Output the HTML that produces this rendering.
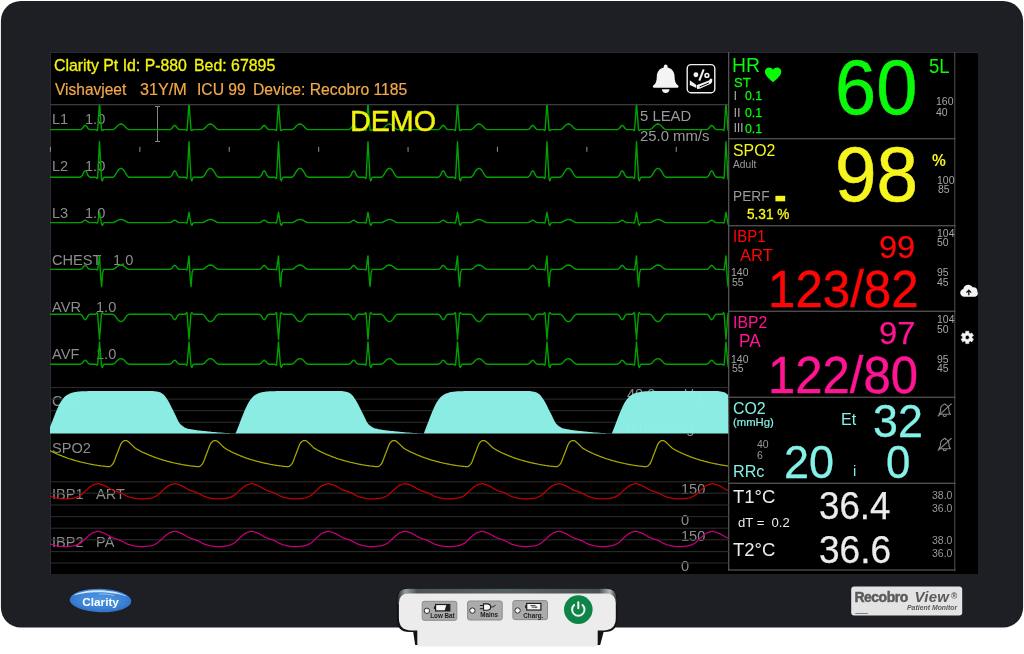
<!DOCTYPE html>
<html lang="en">
<head>
<meta charset="utf-8">
<title>Recobro View Patient Monitor</title>
<style>
html,body{margin:0;padding:0;background:#fff;}
body{width:1024px;height:654px;position:relative;overflow:hidden;font-family:"Liberation Sans", sans-serif;}
.screen{position:absolute;left:50px;top:52px;width:928px;height:522px;background:#000;box-sizing:border-box;border-left:1px solid #2b2c31;border-top:1px solid #2b2c31;}
.t{position:absolute;white-space:pre;line-height:1;font-family:"Liberation Sans", sans-serif;}
svg.ov{position:absolute;left:0;top:0;}
.lay{position:absolute;left:0;top:0;width:1024px;height:654px;will-change:transform;}
</style>
</head>
<body>
<svg class="ov" width="1024" height="654" viewBox="0 0 1024 654"><rect x="0.9" y="0.9" width="1022.2" height="626.6" rx="20" ry="20" fill="#1e1f24"/></svg>
<div class="screen"></div>

<div class="lay">
<div class="t" style="left:51.60px;top:110px;font-size:15.2px;line-height:17px;color:#8c8c8c;transform:scaleX(0.9606);transform-origin:0 50%;">L1</div>
<div class="t" style="left:85.00px;top:110px;font-size:15.2px;line-height:17px;color:#8c8c8c;transform:scaleX(0.9606);transform-origin:0 50%;">1.0</div>
<div class="t" style="left:51.60px;top:157px;font-size:15.2px;line-height:17px;color:#8c8c8c;transform:scaleX(0.9606);transform-origin:0 50%;">L2</div>
<div class="t" style="left:85.00px;top:157px;font-size:15.2px;line-height:17px;color:#8c8c8c;transform:scaleX(0.9606);transform-origin:0 50%;">1.0</div>
<div class="t" style="left:51.60px;top:204px;font-size:15.2px;line-height:17px;color:#8c8c8c;transform:scaleX(0.9606);transform-origin:0 50%;">L3</div>
<div class="t" style="left:85.00px;top:204px;font-size:15.2px;line-height:17px;color:#8c8c8c;transform:scaleX(0.9606);transform-origin:0 50%;">1.0</div>
<div class="t" style="left:51.60px;top:251px;font-size:15.2px;line-height:17px;color:#8c8c8c;transform:scaleX(0.9606);transform-origin:0 50%;">CHEST</div>
<div class="t" style="left:113.20px;top:251px;font-size:15.2px;line-height:17px;color:#8c8c8c;transform:scaleX(0.9606);transform-origin:0 50%;">1.0</div>
<div class="t" style="left:51.60px;top:298px;font-size:15.2px;line-height:17px;color:#8c8c8c;transform:scaleX(0.9606);transform-origin:0 50%;">AVR</div>
<div class="t" style="left:95.80px;top:298px;font-size:15.2px;line-height:17px;color:#8c8c8c;transform:scaleX(0.9606);transform-origin:0 50%;">1.0</div>
<div class="t" style="left:51.60px;top:345px;font-size:15.2px;line-height:17px;color:#8c8c8c;transform:scaleX(0.9606);transform-origin:0 50%;">AVF</div>
<div class="t" style="left:95.80px;top:345px;font-size:15.2px;line-height:17px;color:#8c8c8c;transform:scaleX(0.9606);transform-origin:0 50%;">1.0</div>
<div class="t" style="left:51.60px;top:392px;font-size:15.2px;line-height:17px;color:#8c8c8c;transform:scaleX(0.9606);transform-origin:0 50%;">CO2</div>
<div class="t" style="left:51.60px;top:439px;font-size:15.2px;line-height:17px;color:#8c8c8c;transform:scaleX(0.9606);transform-origin:0 50%;">SPO2</div>
<div class="t" style="left:51.60px;top:485px;font-size:15.2px;line-height:17px;color:#8c8c8c;transform:scaleX(0.9606);transform-origin:0 50%;">IBP1</div>
<div class="t" style="left:95.60px;top:485px;font-size:15.2px;line-height:17px;color:#8c8c8c;transform:scaleX(0.9606);transform-origin:0 50%;">ART</div>
<div class="t" style="left:51.60px;top:533px;font-size:15.2px;line-height:17px;color:#8c8c8c;transform:scaleX(0.9606);transform-origin:0 50%;">IBP2</div>
<div class="t" style="left:96.00px;top:533px;font-size:15.2px;line-height:17px;color:#8c8c8c;transform:scaleX(0.9606);transform-origin:0 50%;">PA</div>
<div class="t" style="left:626.60px;top:385px;font-size:15.2px;line-height:17px;color:#8c8c8c;transform:scaleX(0.9606);transform-origin:0 50%;">40.0 mmHg</div>
<div class="t" style="left:627.20px;top:419px;font-size:15.2px;line-height:17px;color:#8c8c8c;transform:scaleX(0.9606);transform-origin:0 50%;">0.0 mmHg</div>
<div class="t" style="left:681.00px;top:480px;font-size:15.2px;line-height:17px;color:#8c8c8c;transform:scaleX(0.9606);transform-origin:0 50%;">150</div>
<div class="t" style="left:681.30px;top:511px;font-size:15.2px;line-height:17px;color:#8c8c8c;transform:scaleX(0.9606);transform-origin:0 50%;">0</div>
<div class="t" style="left:681.00px;top:527px;font-size:15.2px;line-height:17px;color:#8c8c8c;transform:scaleX(0.9606);transform-origin:0 50%;">150</div>
<div class="t" style="left:681.30px;top:557px;font-size:15.2px;line-height:17px;color:#8c8c8c;transform:scaleX(0.9606);transform-origin:0 50%;">0</div>
</div>
<svg class="ov" width="1024" height="654" viewBox="0 0 1024 654">
<rect x="50" y="104.0" width="679" height="1.3" fill="#3c3c3c"/>
<rect x="728.1" y="52" width="1.2" height="518.6" fill="#5a5a5a"/>
<rect x="954.2" y="52" width="1.1" height="518.6" fill="#4b4b4b"/>
<rect x="728.1" y="138.15" width="227.4" height="1.2" fill="#5a5a5a"/>
<rect x="728.1" y="225.15" width="227.4" height="1.2" fill="#5a5a5a"/>
<rect x="728.1" y="310.65" width="227.4" height="1.2" fill="#5a5a5a"/>
<rect x="728.1" y="396.65" width="227.4" height="1.2" fill="#5a5a5a"/>
<rect x="728.1" y="482.65" width="227.4" height="1.2" fill="#5a5a5a"/>
<rect x="728.1" y="569.4" width="227.4" height="1.2" fill="#5a5a5a"/>
<rect x="775.4" y="195.8" width="9.8" height="5.5" fill="#f6f61e"/>
<clipPath id="wc"><rect x="50" y="105" width="678.5" height="469"/></clipPath>
<rect x="50" y="386.95" width="678.5" height="1.1" fill="#2b2b2b"/>
<rect x="50" y="398.55" width="678.5" height="1.1" fill="#2b2b2b"/>
<rect x="50" y="410.15" width="678.5" height="1.1" fill="#2b2b2b"/>
<rect x="50" y="421.75" width="678.5" height="1.1" fill="#2b2b2b"/>
<rect x="50" y="481.25" width="678.5" height="1.1" fill="#2b2b2b"/>
<rect x="50" y="492.65" width="678.5" height="1.1" fill="#2b2b2b"/>
<rect x="50" y="504.45" width="678.5" height="1.1" fill="#2b2b2b"/>
<rect x="50" y="516.05" width="678.5" height="1.1" fill="#2b2b2b"/>
<rect x="50" y="527.65" width="678.5" height="1.1" fill="#2b2b2b"/>
<rect x="50" y="539.25" width="678.5" height="1.1" fill="#2b2b2b"/>
<rect x="50" y="551.05" width="678.5" height="1.1" fill="#2b2b2b"/>
<rect x="50" y="562.45" width="678.5" height="1.1" fill="#2b2b2b"/>
<rect x="49.9" y="146.9" width="1.1" height="4.9" fill="#858585"/>
<rect x="139.3" y="146.9" width="1.1" height="4.9" fill="#858585"/>
<rect x="228.7" y="146.9" width="1.1" height="4.9" fill="#858585"/>
<rect x="318.1" y="146.9" width="1.1" height="4.9" fill="#858585"/>
<rect x="407.5" y="146.9" width="1.1" height="4.9" fill="#858585"/>
<rect x="496.9" y="146.9" width="1.1" height="4.9" fill="#858585"/>
<rect x="586.3" y="146.9" width="1.1" height="4.9" fill="#858585"/>
<rect x="675.7" y="146.9" width="1.1" height="4.9" fill="#858585"/>
<path d="M157.5 106.5V141.5M155 106.5H160M155 141.5H160" stroke="#858585" stroke-width="1" fill="none"/>
<path d="M-9.0 129.6 L-7.2 128.5 L-5.6 126.2 L-4.3 125.3 L-3.0 126.2 L-1.4 128.5 L0.2 129.6 L6.4 129.6 L7.5 130.6 L8.1 130.2 L10.0 102.6 L12.0 130.1 L12.9 130.6 L13.9 129.8 L15.0 129.6 L23.5 129.6 L25.5 128.5 L28.0 125.7 L30.0 124.3 L31.4 124.0 L32.8 124.3 L34.8 125.7 L37.3 128.5 L39.3 129.6 L80.5 129.6 L82.3 128.5 L83.9 126.2 L85.2 125.3 L86.5 126.2 L88.1 128.5 L89.7 129.6 L95.9 129.6 L97.0 130.6 L97.6 130.2 L99.5 102.6 L101.5 130.1 L102.4 130.6 L103.4 129.8 L104.5 129.6 L113.0 129.6 L115.0 128.5 L117.5 125.7 L119.5 124.3 L120.9 124.0 L122.3 124.3 L124.3 125.7 L126.8 128.5 L128.8 129.6 L170.0 129.6 L171.8 128.5 L173.4 126.2 L174.7 125.3 L176.0 126.2 L177.6 128.5 L179.2 129.6 L185.4 129.6 L186.5 130.6 L187.1 130.2 L189.0 102.6 L191.0 130.1 L191.9 130.6 L192.9 129.8 L194.0 129.6 L202.5 129.6 L204.5 128.5 L207.0 125.7 L209.0 124.3 L210.4 124.0 L211.8 124.3 L213.8 125.7 L216.3 128.5 L218.3 129.6 L259.5 129.6 L261.3 128.5 L262.9 126.2 L264.2 125.3 L265.5 126.2 L267.1 128.5 L268.7 129.6 L274.9 129.6 L276.0 130.6 L276.6 130.2 L278.5 102.6 L280.5 130.1 L281.4 130.6 L282.4 129.8 L283.5 129.6 L292.0 129.6 L294.0 128.5 L296.5 125.7 L298.5 124.3 L299.9 124.0 L301.3 124.3 L303.3 125.7 L305.8 128.5 L307.8 129.6 L349.0 129.6 L350.8 128.5 L352.4 126.2 L353.7 125.3 L355.0 126.2 L356.6 128.5 L358.2 129.6 L364.4 129.6 L365.5 130.6 L366.1 130.2 L368.0 102.6 L370.0 130.1 L370.9 130.6 L371.9 129.8 L373.0 129.6 L381.5 129.6 L383.5 128.5 L386.0 125.7 L388.0 124.3 L389.4 124.0 L390.8 124.3 L392.8 125.7 L395.3 128.5 L397.3 129.6 L438.5 129.6 L440.3 128.5 L441.9 126.2 L443.2 125.3 L444.5 126.2 L446.1 128.5 L447.7 129.6 L453.9 129.6 L455.0 130.6 L455.6 130.2 L457.5 102.6 L459.5 130.1 L460.4 130.6 L461.4 129.8 L462.5 129.6 L471.0 129.6 L473.0 128.5 L475.5 125.7 L477.5 124.3 L478.9 124.0 L480.3 124.3 L482.3 125.7 L484.8 128.5 L486.8 129.6 L528.0 129.6 L529.8 128.5 L531.4 126.2 L532.7 125.3 L534.0 126.2 L535.6 128.5 L537.2 129.6 L543.4 129.6 L544.5 130.6 L545.1 130.2 L547.0 102.6 L549.0 130.1 L549.9 130.6 L550.9 129.8 L552.0 129.6 L560.5 129.6 L562.5 128.5 L565.0 125.7 L567.0 124.3 L568.4 124.0 L569.8 124.3 L571.8 125.7 L574.3 128.5 L576.3 129.6 L617.5 129.6 L619.3 128.5 L620.9 126.2 L622.2 125.3 L623.5 126.2 L625.1 128.5 L626.7 129.6 L632.9 129.6 L634.0 130.6 L634.6 130.2 L636.5 102.6 L638.5 130.1 L639.4 130.6 L640.4 129.8 L641.5 129.6 L650.0 129.6 L652.0 128.5 L654.5 125.7 L656.5 124.3 L657.9 124.0 L659.3 124.3 L661.3 125.7 L663.8 128.5 L665.8 129.6 L707.0 129.6 L708.8 128.5 L710.4 126.2 L711.7 125.3 L713.0 126.2 L714.6 128.5 L716.2 129.6 L722.4 129.6 L723.5 130.6 L724.1 130.2 L726.0 102.6 L728.0 130.1 L728.9 130.6 L729.9 129.8 L731.0 129.6 L739.5 129.6 L741.5 128.5 L744.0 125.7 L746.0 124.3 L747.4 124.0 L748.8 124.3 L750.8 125.7 L753.3 128.5 L755.3 129.6" stroke="#00a200" stroke-width="1.4" fill="none" stroke-linejoin="round" clip-path="url(#wc)"/>
<path d="M-9.0 177.2 L-7.2 175.6 L-5.6 172.0 L-4.3 170.7 L-3.0 172.0 L-1.4 175.6 L0.2 177.2 L6.4 177.2 L7.5 178.5 L8.1 178.0 L10.0 141.7 L12.0 179.0 L12.9 180.9 L13.9 177.9 L15.0 177.2 L23.5 177.2 L25.5 175.4 L28.0 171.0 L30.0 168.8 L31.4 168.3 L32.8 168.8 L34.8 171.0 L37.3 175.4 L39.3 177.2 L80.5 177.2 L82.3 175.6 L83.9 172.0 L85.2 170.7 L86.5 172.0 L88.1 175.6 L89.7 177.2 L95.9 177.2 L97.0 178.5 L97.6 178.0 L99.5 141.7 L101.5 179.0 L102.4 180.9 L103.4 177.9 L104.5 177.2 L113.0 177.2 L115.0 175.4 L117.5 171.0 L119.5 168.8 L120.9 168.3 L122.3 168.8 L124.3 171.0 L126.8 175.4 L128.8 177.2 L170.0 177.2 L171.8 175.6 L173.4 172.0 L174.7 170.7 L176.0 172.0 L177.6 175.6 L179.2 177.2 L185.4 177.2 L186.5 178.5 L187.1 178.0 L189.0 141.7 L191.0 179.0 L191.9 180.9 L192.9 177.9 L194.0 177.2 L202.5 177.2 L204.5 175.4 L207.0 171.0 L209.0 168.8 L210.4 168.3 L211.8 168.8 L213.8 171.0 L216.3 175.4 L218.3 177.2 L259.5 177.2 L261.3 175.6 L262.9 172.0 L264.2 170.7 L265.5 172.0 L267.1 175.6 L268.7 177.2 L274.9 177.2 L276.0 178.5 L276.6 178.0 L278.5 141.7 L280.5 179.0 L281.4 180.9 L282.4 177.9 L283.5 177.2 L292.0 177.2 L294.0 175.4 L296.5 171.0 L298.5 168.8 L299.9 168.3 L301.3 168.8 L303.3 171.0 L305.8 175.4 L307.8 177.2 L349.0 177.2 L350.8 175.6 L352.4 172.0 L353.7 170.7 L355.0 172.0 L356.6 175.6 L358.2 177.2 L364.4 177.2 L365.5 178.5 L366.1 178.0 L368.0 141.7 L370.0 179.0 L370.9 180.9 L371.9 177.9 L373.0 177.2 L381.5 177.2 L383.5 175.4 L386.0 171.0 L388.0 168.8 L389.4 168.3 L390.8 168.8 L392.8 171.0 L395.3 175.4 L397.3 177.2 L438.5 177.2 L440.3 175.6 L441.9 172.0 L443.2 170.7 L444.5 172.0 L446.1 175.6 L447.7 177.2 L453.9 177.2 L455.0 178.5 L455.6 178.0 L457.5 141.7 L459.5 179.0 L460.4 180.9 L461.4 177.9 L462.5 177.2 L471.0 177.2 L473.0 175.4 L475.5 171.0 L477.5 168.8 L478.9 168.3 L480.3 168.8 L482.3 171.0 L484.8 175.4 L486.8 177.2 L528.0 177.2 L529.8 175.6 L531.4 172.0 L532.7 170.7 L534.0 172.0 L535.6 175.6 L537.2 177.2 L543.4 177.2 L544.5 178.5 L545.1 178.0 L547.0 141.7 L549.0 179.0 L549.9 180.9 L550.9 177.9 L552.0 177.2 L560.5 177.2 L562.5 175.4 L565.0 171.0 L567.0 168.8 L568.4 168.3 L569.8 168.8 L571.8 171.0 L574.3 175.4 L576.3 177.2 L617.5 177.2 L619.3 175.6 L620.9 172.0 L622.2 170.7 L623.5 172.0 L625.1 175.6 L626.7 177.2 L632.9 177.2 L634.0 178.5 L634.6 178.0 L636.5 141.7 L638.5 179.0 L639.4 180.9 L640.4 177.9 L641.5 177.2 L650.0 177.2 L652.0 175.4 L654.5 171.0 L656.5 168.8 L657.9 168.3 L659.3 168.8 L661.3 171.0 L663.8 175.4 L665.8 177.2 L707.0 177.2 L708.8 175.6 L710.4 172.0 L711.7 170.7 L713.0 172.0 L714.6 175.6 L716.2 177.2 L722.4 177.2 L723.5 178.5 L724.1 178.0 L726.0 141.7 L728.0 179.0 L728.9 180.9 L729.9 177.9 L731.0 177.2 L739.5 177.2 L741.5 175.4 L744.0 171.0 L746.0 168.8 L747.4 168.3 L748.8 168.8 L750.8 171.0 L753.3 175.4 L755.3 177.2" stroke="#00a200" stroke-width="1.4" fill="none" stroke-linejoin="round" clip-path="url(#wc)"/>
<path d="M-9.0 222.6 L-7.2 222.0 L-5.6 220.7 L-4.3 220.2 L-3.0 220.7 L-1.4 222.0 L0.2 222.6 L6.4 222.6 L7.5 223.1 L8.1 222.9 L10.0 212.3 L12.0 224.0 L12.9 225.4 L13.9 223.2 L15.0 222.6 L23.5 222.6 L25.5 222.0 L28.0 220.4 L30.0 219.6 L31.4 219.4 L32.8 219.6 L34.8 220.4 L37.3 222.0 L39.3 222.6 L80.5 222.6 L82.3 222.0 L83.9 220.7 L85.2 220.2 L86.5 220.7 L88.1 222.0 L89.7 222.6 L95.9 222.6 L97.0 223.1 L97.6 222.9 L99.5 212.3 L101.5 224.0 L102.4 225.4 L103.4 223.2 L104.5 222.6 L113.0 222.6 L115.0 222.0 L117.5 220.4 L119.5 219.6 L120.9 219.4 L122.3 219.6 L124.3 220.4 L126.8 222.0 L128.8 222.6 L170.0 222.6 L171.8 222.0 L173.4 220.7 L174.7 220.2 L176.0 220.7 L177.6 222.0 L179.2 222.6 L185.4 222.6 L186.5 223.1 L187.1 222.9 L189.0 212.3 L191.0 224.0 L191.9 225.4 L192.9 223.2 L194.0 222.6 L202.5 222.6 L204.5 222.0 L207.0 220.4 L209.0 219.6 L210.4 219.4 L211.8 219.6 L213.8 220.4 L216.3 222.0 L218.3 222.6 L259.5 222.6 L261.3 222.0 L262.9 220.7 L264.2 220.2 L265.5 220.7 L267.1 222.0 L268.7 222.6 L274.9 222.6 L276.0 223.1 L276.6 222.9 L278.5 212.3 L280.5 224.0 L281.4 225.4 L282.4 223.2 L283.5 222.6 L292.0 222.6 L294.0 222.0 L296.5 220.4 L298.5 219.6 L299.9 219.4 L301.3 219.6 L303.3 220.4 L305.8 222.0 L307.8 222.6 L349.0 222.6 L350.8 222.0 L352.4 220.7 L353.7 220.2 L355.0 220.7 L356.6 222.0 L358.2 222.6 L364.4 222.6 L365.5 223.1 L366.1 222.9 L368.0 212.3 L370.0 224.0 L370.9 225.4 L371.9 223.2 L373.0 222.6 L381.5 222.6 L383.5 222.0 L386.0 220.4 L388.0 219.6 L389.4 219.4 L390.8 219.6 L392.8 220.4 L395.3 222.0 L397.3 222.6 L438.5 222.6 L440.3 222.0 L441.9 220.7 L443.2 220.2 L444.5 220.7 L446.1 222.0 L447.7 222.6 L453.9 222.6 L455.0 223.1 L455.6 222.9 L457.5 212.3 L459.5 224.0 L460.4 225.4 L461.4 223.2 L462.5 222.6 L471.0 222.6 L473.0 222.0 L475.5 220.4 L477.5 219.6 L478.9 219.4 L480.3 219.6 L482.3 220.4 L484.8 222.0 L486.8 222.6 L528.0 222.6 L529.8 222.0 L531.4 220.7 L532.7 220.2 L534.0 220.7 L535.6 222.0 L537.2 222.6 L543.4 222.6 L544.5 223.1 L545.1 222.9 L547.0 212.3 L549.0 224.0 L549.9 225.4 L550.9 223.2 L552.0 222.6 L560.5 222.6 L562.5 222.0 L565.0 220.4 L567.0 219.6 L568.4 219.4 L569.8 219.6 L571.8 220.4 L574.3 222.0 L576.3 222.6 L617.5 222.6 L619.3 222.0 L620.9 220.7 L622.2 220.2 L623.5 220.7 L625.1 222.0 L626.7 222.6 L632.9 222.6 L634.0 223.1 L634.6 222.9 L636.5 212.3 L638.5 224.0 L639.4 225.4 L640.4 223.2 L641.5 222.6 L650.0 222.6 L652.0 222.0 L654.5 220.4 L656.5 219.6 L657.9 219.4 L659.3 219.6 L661.3 220.4 L663.8 222.0 L665.8 222.6 L707.0 222.6 L708.8 222.0 L710.4 220.7 L711.7 220.2 L713.0 220.7 L714.6 222.0 L716.2 222.6 L722.4 222.6 L723.5 223.1 L724.1 222.9 L726.0 212.3 L728.0 224.0 L728.9 225.4 L729.9 223.2 L731.0 222.6 L739.5 222.6 L741.5 222.0 L744.0 220.4 L746.0 219.6 L747.4 219.4 L748.8 219.6 L750.8 220.4 L753.3 222.0 L755.3 222.6" stroke="#00a200" stroke-width="1.4" fill="none" stroke-linejoin="round" clip-path="url(#wc)"/>
<path d="M-9.0 269.4 L-7.2 268.4 L-5.6 266.1 L-4.3 265.3 L-3.0 266.1 L-1.4 268.4 L0.2 269.4 L6.4 269.4 L7.5 270.0 L8.1 269.8 L10.0 255.9 L11.2 277.9 L12.1 286.5 L13.1 272.8 L14.2 269.4 L23.5 269.4 L25.5 268.5 L28.0 266.3 L30.0 265.2 L31.4 265.0 L32.8 265.2 L34.8 266.3 L37.3 268.5 L39.3 269.4 L80.5 269.4 L82.3 268.4 L83.9 266.1 L85.2 265.3 L86.5 266.1 L88.1 268.4 L89.7 269.4 L95.9 269.4 L97.0 270.0 L97.6 269.8 L99.5 255.9 L100.7 277.9 L101.6 286.5 L102.6 272.8 L103.7 269.4 L113.0 269.4 L115.0 268.5 L117.5 266.3 L119.5 265.2 L120.9 265.0 L122.3 265.2 L124.3 266.3 L126.8 268.5 L128.8 269.4 L170.0 269.4 L171.8 268.4 L173.4 266.1 L174.7 265.3 L176.0 266.1 L177.6 268.4 L179.2 269.4 L185.4 269.4 L186.5 270.0 L187.1 269.8 L189.0 255.9 L190.2 277.9 L191.1 286.5 L192.1 272.8 L193.2 269.4 L202.5 269.4 L204.5 268.5 L207.0 266.3 L209.0 265.2 L210.4 265.0 L211.8 265.2 L213.8 266.3 L216.3 268.5 L218.3 269.4 L259.5 269.4 L261.3 268.4 L262.9 266.1 L264.2 265.3 L265.5 266.1 L267.1 268.4 L268.7 269.4 L274.9 269.4 L276.0 270.0 L276.6 269.8 L278.5 255.9 L279.7 277.9 L280.6 286.5 L281.6 272.8 L282.7 269.4 L292.0 269.4 L294.0 268.5 L296.5 266.3 L298.5 265.2 L299.9 265.0 L301.3 265.2 L303.3 266.3 L305.8 268.5 L307.8 269.4 L349.0 269.4 L350.8 268.4 L352.4 266.1 L353.7 265.3 L355.0 266.1 L356.6 268.4 L358.2 269.4 L364.4 269.4 L365.5 270.0 L366.1 269.8 L368.0 255.9 L369.2 277.9 L370.1 286.5 L371.1 272.8 L372.2 269.4 L381.5 269.4 L383.5 268.5 L386.0 266.3 L388.0 265.2 L389.4 265.0 L390.8 265.2 L392.8 266.3 L395.3 268.5 L397.3 269.4 L438.5 269.4 L440.3 268.4 L441.9 266.1 L443.2 265.3 L444.5 266.1 L446.1 268.4 L447.7 269.4 L453.9 269.4 L455.0 270.0 L455.6 269.8 L457.5 255.9 L458.7 277.9 L459.6 286.5 L460.6 272.8 L461.7 269.4 L471.0 269.4 L473.0 268.5 L475.5 266.3 L477.5 265.2 L478.9 265.0 L480.3 265.2 L482.3 266.3 L484.8 268.5 L486.8 269.4 L528.0 269.4 L529.8 268.4 L531.4 266.1 L532.7 265.3 L534.0 266.1 L535.6 268.4 L537.2 269.4 L543.4 269.4 L544.5 270.0 L545.1 269.8 L547.0 255.9 L548.2 277.9 L549.1 286.5 L550.1 272.8 L551.2 269.4 L560.5 269.4 L562.5 268.5 L565.0 266.3 L567.0 265.2 L568.4 265.0 L569.8 265.2 L571.8 266.3 L574.3 268.5 L576.3 269.4 L617.5 269.4 L619.3 268.4 L620.9 266.1 L622.2 265.3 L623.5 266.1 L625.1 268.4 L626.7 269.4 L632.9 269.4 L634.0 270.0 L634.6 269.8 L636.5 255.9 L637.7 277.9 L638.6 286.5 L639.6 272.8 L640.7 269.4 L650.0 269.4 L652.0 268.5 L654.5 266.3 L656.5 265.2 L657.9 265.0 L659.3 265.2 L661.3 266.3 L663.8 268.5 L665.8 269.4 L707.0 269.4 L708.8 268.4 L710.4 266.1 L711.7 265.3 L713.0 266.1 L714.6 268.4 L716.2 269.4 L722.4 269.4 L723.5 270.0 L724.1 269.8 L726.0 255.9 L727.2 277.9 L728.1 286.5 L729.1 272.8 L730.2 269.4 L739.5 269.4 L741.5 268.5 L744.0 266.3 L746.0 265.2 L747.4 265.0 L748.8 265.2 L750.8 266.3 L753.3 268.5 L755.3 269.4" stroke="#00a200" stroke-width="1.4" fill="none" stroke-linejoin="round" clip-path="url(#wc)"/>
<path d="M-9.0 314.2 L-7.2 315.6 L-5.6 318.7 L-4.3 319.8 L-3.0 318.7 L-1.4 315.6 L0.2 314.2 L6.4 314.2 L7.5 312.6 L8.1 313.3 L10.0 339.2 L12.0 313.4 L12.9 312.6 L13.9 313.9 L15.0 314.2 L23.5 314.2 L25.5 315.7 L28.0 319.4 L30.0 321.3 L31.4 321.6 L32.8 321.3 L34.8 319.4 L37.3 315.7 L39.3 314.2 L80.5 314.2 L82.3 315.6 L83.9 318.7 L85.2 319.8 L86.5 318.7 L88.1 315.6 L89.7 314.2 L95.9 314.2 L97.0 312.6 L97.6 313.3 L99.5 339.2 L101.5 313.4 L102.4 312.6 L103.4 313.9 L104.5 314.2 L113.0 314.2 L115.0 315.7 L117.5 319.4 L119.5 321.3 L120.9 321.6 L122.3 321.3 L124.3 319.4 L126.8 315.7 L128.8 314.2 L170.0 314.2 L171.8 315.6 L173.4 318.7 L174.7 319.8 L176.0 318.7 L177.6 315.6 L179.2 314.2 L185.4 314.2 L186.5 312.6 L187.1 313.3 L189.0 339.2 L191.0 313.4 L191.9 312.6 L192.9 313.9 L194.0 314.2 L202.5 314.2 L204.5 315.7 L207.0 319.4 L209.0 321.3 L210.4 321.6 L211.8 321.3 L213.8 319.4 L216.3 315.7 L218.3 314.2 L259.5 314.2 L261.3 315.6 L262.9 318.7 L264.2 319.8 L265.5 318.7 L267.1 315.6 L268.7 314.2 L274.9 314.2 L276.0 312.6 L276.6 313.3 L278.5 339.2 L280.5 313.4 L281.4 312.6 L282.4 313.9 L283.5 314.2 L292.0 314.2 L294.0 315.7 L296.5 319.4 L298.5 321.3 L299.9 321.6 L301.3 321.3 L303.3 319.4 L305.8 315.7 L307.8 314.2 L349.0 314.2 L350.8 315.6 L352.4 318.7 L353.7 319.8 L355.0 318.7 L356.6 315.6 L358.2 314.2 L364.4 314.2 L365.5 312.6 L366.1 313.3 L368.0 339.2 L370.0 313.4 L370.9 312.6 L371.9 313.9 L373.0 314.2 L381.5 314.2 L383.5 315.7 L386.0 319.4 L388.0 321.3 L389.4 321.6 L390.8 321.3 L392.8 319.4 L395.3 315.7 L397.3 314.2 L438.5 314.2 L440.3 315.6 L441.9 318.7 L443.2 319.8 L444.5 318.7 L446.1 315.6 L447.7 314.2 L453.9 314.2 L455.0 312.6 L455.6 313.3 L457.5 339.2 L459.5 313.4 L460.4 312.6 L461.4 313.9 L462.5 314.2 L471.0 314.2 L473.0 315.7 L475.5 319.4 L477.5 321.3 L478.9 321.6 L480.3 321.3 L482.3 319.4 L484.8 315.7 L486.8 314.2 L528.0 314.2 L529.8 315.6 L531.4 318.7 L532.7 319.8 L534.0 318.7 L535.6 315.6 L537.2 314.2 L543.4 314.2 L544.5 312.6 L545.1 313.3 L547.0 339.2 L549.0 313.4 L549.9 312.6 L550.9 313.9 L552.0 314.2 L560.5 314.2 L562.5 315.7 L565.0 319.4 L567.0 321.3 L568.4 321.6 L569.8 321.3 L571.8 319.4 L574.3 315.7 L576.3 314.2 L617.5 314.2 L619.3 315.6 L620.9 318.7 L622.2 319.8 L623.5 318.7 L625.1 315.6 L626.7 314.2 L632.9 314.2 L634.0 312.6 L634.6 313.3 L636.5 339.2 L638.5 313.4 L639.4 312.6 L640.4 313.9 L641.5 314.2 L650.0 314.2 L652.0 315.7 L654.5 319.4 L656.5 321.3 L657.9 321.6 L659.3 321.3 L661.3 319.4 L663.8 315.7 L665.8 314.2 L707.0 314.2 L708.8 315.6 L710.4 318.7 L711.7 319.8 L713.0 318.7 L714.6 315.6 L716.2 314.2 L722.4 314.2 L723.5 312.6 L724.1 313.3 L726.0 339.2 L728.0 313.4 L728.9 312.6 L729.9 313.9 L731.0 314.2 L739.5 314.2 L741.5 315.7 L744.0 319.4 L746.0 321.3 L747.4 321.6 L748.8 321.3 L750.8 319.4 L753.3 315.7 L755.3 314.2" stroke="#00a200" stroke-width="1.4" fill="none" stroke-linejoin="round" clip-path="url(#wc)"/>
<path d="M-9.0 364.2 L-7.2 363.2 L-5.6 361.0 L-4.3 360.2 L-3.0 361.0 L-1.4 363.2 L0.2 364.2 L6.4 364.2 L7.5 365.2 L8.1 364.8 L10.0 342.0 L12.0 365.9 L12.9 367.6 L13.9 364.9 L15.0 364.2 L23.5 364.2 L25.5 363.1 L28.0 360.3 L30.0 358.9 L31.4 358.6 L32.8 358.9 L34.8 360.3 L37.3 363.1 L39.3 364.2 L80.5 364.2 L82.3 363.2 L83.9 361.0 L85.2 360.2 L86.5 361.0 L88.1 363.2 L89.7 364.2 L95.9 364.2 L97.0 365.2 L97.6 364.8 L99.5 342.0 L101.5 365.9 L102.4 367.6 L103.4 364.9 L104.5 364.2 L113.0 364.2 L115.0 363.1 L117.5 360.3 L119.5 358.9 L120.9 358.6 L122.3 358.9 L124.3 360.3 L126.8 363.1 L128.8 364.2 L170.0 364.2 L171.8 363.2 L173.4 361.0 L174.7 360.2 L176.0 361.0 L177.6 363.2 L179.2 364.2 L185.4 364.2 L186.5 365.2 L187.1 364.8 L189.0 342.0 L191.0 365.9 L191.9 367.6 L192.9 364.9 L194.0 364.2 L202.5 364.2 L204.5 363.1 L207.0 360.3 L209.0 358.9 L210.4 358.6 L211.8 358.9 L213.8 360.3 L216.3 363.1 L218.3 364.2 L259.5 364.2 L261.3 363.2 L262.9 361.0 L264.2 360.2 L265.5 361.0 L267.1 363.2 L268.7 364.2 L274.9 364.2 L276.0 365.2 L276.6 364.8 L278.5 342.0 L280.5 365.9 L281.4 367.6 L282.4 364.9 L283.5 364.2 L292.0 364.2 L294.0 363.1 L296.5 360.3 L298.5 358.9 L299.9 358.6 L301.3 358.9 L303.3 360.3 L305.8 363.1 L307.8 364.2 L349.0 364.2 L350.8 363.2 L352.4 361.0 L353.7 360.2 L355.0 361.0 L356.6 363.2 L358.2 364.2 L364.4 364.2 L365.5 365.2 L366.1 364.8 L368.0 342.0 L370.0 365.9 L370.9 367.6 L371.9 364.9 L373.0 364.2 L381.5 364.2 L383.5 363.1 L386.0 360.3 L388.0 358.9 L389.4 358.6 L390.8 358.9 L392.8 360.3 L395.3 363.1 L397.3 364.2 L438.5 364.2 L440.3 363.2 L441.9 361.0 L443.2 360.2 L444.5 361.0 L446.1 363.2 L447.7 364.2 L453.9 364.2 L455.0 365.2 L455.6 364.8 L457.5 342.0 L459.5 365.9 L460.4 367.6 L461.4 364.9 L462.5 364.2 L471.0 364.2 L473.0 363.1 L475.5 360.3 L477.5 358.9 L478.9 358.6 L480.3 358.9 L482.3 360.3 L484.8 363.1 L486.8 364.2 L528.0 364.2 L529.8 363.2 L531.4 361.0 L532.7 360.2 L534.0 361.0 L535.6 363.2 L537.2 364.2 L543.4 364.2 L544.5 365.2 L545.1 364.8 L547.0 342.0 L549.0 365.9 L549.9 367.6 L550.9 364.9 L552.0 364.2 L560.5 364.2 L562.5 363.1 L565.0 360.3 L567.0 358.9 L568.4 358.6 L569.8 358.9 L571.8 360.3 L574.3 363.1 L576.3 364.2 L617.5 364.2 L619.3 363.2 L620.9 361.0 L622.2 360.2 L623.5 361.0 L625.1 363.2 L626.7 364.2 L632.9 364.2 L634.0 365.2 L634.6 364.8 L636.5 342.0 L638.5 365.9 L639.4 367.6 L640.4 364.9 L641.5 364.2 L650.0 364.2 L652.0 363.1 L654.5 360.3 L656.5 358.9 L657.9 358.6 L659.3 358.9 L661.3 360.3 L663.8 363.1 L665.8 364.2 L707.0 364.2 L708.8 363.2 L710.4 361.0 L711.7 360.2 L713.0 361.0 L714.6 363.2 L716.2 364.2 L722.4 364.2 L723.5 365.2 L724.1 364.8 L726.0 342.0 L728.0 365.9 L728.9 367.6 L729.9 364.9 L731.0 364.2 L739.5 364.2 L741.5 363.1 L744.0 360.3 L746.0 358.9 L747.4 358.6 L748.8 358.9 L750.8 360.3 L753.3 363.1 L755.3 364.2" stroke="#00a200" stroke-width="1.4" fill="none" stroke-linejoin="round" clip-path="url(#wc)"/>
<path d="M50 433.4 L50.0 427.2 L51.0 424.6 L52.0 422.0 L53.0 419.4 L54.0 416.8 L55.0 414.2 L56.0 411.8 L57.0 409.5 L58.0 407.3 L59.0 405.2 L60.0 403.2 L61.0 401.5 L62.0 400.1 L63.0 398.8 L64.0 397.6 L65.0 396.6 L66.0 395.8 L67.0 395.1 L68.0 394.5 L69.0 393.9 L70.0 393.5 L71.0 393.1 L72.0 392.8 L73.0 392.5 L74.0 392.3 L75.0 392.1 L76.0 391.9 L77.0 391.8 L78.0 391.6 L79.0 391.5 L80.0 391.4 L81.0 391.3 L82.0 391.3 L83.0 391.2 L84.0 391.2 L85.0 391.2 L86.0 391.2 L87.0 391.2 L88.0 391.1 L89.0 391.1 L90.0 391.1 L91.0 391.1 L92.0 391.1 L93.0 391.1 L94.0 391.1 L95.0 391.1 L96.0 391.1 L97.0 391.1 L98.0 391.1 L99.0 391.1 L100.0 391.1 L101.0 391.1 L102.0 391.1 L103.0 391.1 L104.0 391.1 L105.0 391.1 L106.0 391.1 L107.0 391.1 L108.0 391.1 L109.0 391.1 L110.0 391.1 L111.0 391.1 L112.0 391.1 L113.0 391.1 L114.0 391.1 L115.0 391.1 L116.0 391.1 L117.0 391.1 L118.0 391.1 L119.0 391.1 L120.0 391.1 L121.0 391.1 L122.0 391.1 L123.0 391.1 L124.0 391.1 L125.0 391.1 L126.0 391.1 L127.0 391.1 L128.0 391.1 L129.0 391.1 L130.0 391.1 L131.0 391.1 L132.0 391.1 L133.0 391.1 L134.0 391.1 L135.0 391.1 L136.0 391.1 L137.0 391.1 L138.0 391.1 L139.0 391.1 L140.0 391.1 L141.0 391.1 L142.0 391.1 L143.0 391.1 L144.0 391.1 L145.0 391.1 L146.0 391.1 L147.0 391.1 L148.0 391.1 L149.0 391.1 L150.0 391.1 L151.0 391.1 L152.0 391.1 L153.0 391.1 L154.0 391.2 L155.0 391.3 L156.0 391.4 L157.0 391.6 L158.0 391.8 L159.0 392.0 L160.0 392.3 L161.0 392.8 L162.0 393.4 L163.0 394.1 L164.0 395.0 L165.0 396.2 L166.0 397.6 L167.0 399.1 L168.0 400.6 L169.0 402.3 L170.0 404.2 L171.0 406.2 L172.0 408.3 L173.0 410.3 L174.0 412.3 L175.0 414.2 L176.0 416.2 L177.0 418.4 L178.0 420.5 L179.0 422.4 L180.0 423.7 L181.0 424.8 L182.0 425.6 L183.0 426.3 L184.0 427.0 L185.0 427.7 L186.0 428.1 L187.0 428.4 L188.0 428.7 L189.0 428.9 L190.0 429.0 L191.0 429.2 L192.0 429.4 L193.0 429.6 L194.0 429.7 L195.0 429.9 L196.0 430.1 L197.0 430.2 L198.0 430.4 L199.0 430.5 L200.0 430.6 L201.0 430.7 L202.0 430.8 L203.0 430.9 L204.0 431.0 L205.0 431.1 L206.0 431.2 L207.0 431.3 L208.0 431.4 L209.0 431.5 L210.0 431.6 L211.0 431.7 L212.0 431.9 L213.0 432.0 L214.0 432.1 L215.0 432.1 L216.0 432.2 L217.0 432.3 L218.0 432.4 L219.0 432.5 L220.0 432.6 L221.0 432.6 L222.0 432.7 L223.0 432.8 L224.0 432.8 L225.0 432.9 L226.0 433.0 L227.0 433.0 L228.0 433.1 L229.0 433.1 L230.0 433.2 L231.0 433.2 L232.0 433.3 L233.0 433.3 L234.0 433.3 L235.0 433.4 L236.0 432.6 L237.0 430.0 L238.0 427.4 L239.0 424.9 L240.0 422.3 L241.0 419.6 L242.0 417.0 L243.0 414.5 L244.0 412.0 L245.0 409.8 L246.0 407.5 L247.0 405.4 L248.0 403.4 L249.0 401.7 L250.0 400.2 L251.0 398.9 L252.0 397.7 L253.0 396.7 L254.0 395.8 L255.0 395.1 L256.0 394.5 L257.0 394.0 L258.0 393.5 L259.0 393.1 L260.0 392.8 L261.0 392.6 L262.0 392.3 L263.0 392.1 L264.0 392.0 L265.0 391.8 L266.0 391.6 L267.0 391.5 L268.0 391.4 L269.0 391.3 L270.0 391.3 L271.0 391.3 L272.0 391.2 L273.0 391.2 L274.0 391.2 L275.0 391.2 L276.0 391.1 L277.0 391.1 L278.0 391.1 L279.0 391.1 L280.0 391.1 L281.0 391.1 L282.0 391.1 L283.0 391.1 L284.0 391.1 L285.0 391.1 L286.0 391.1 L287.0 391.1 L288.0 391.1 L289.0 391.1 L290.0 391.1 L291.0 391.1 L292.0 391.1 L293.0 391.1 L294.0 391.1 L295.0 391.1 L296.0 391.1 L297.0 391.1 L298.0 391.1 L299.0 391.1 L300.0 391.1 L301.0 391.1 L302.0 391.1 L303.0 391.1 L304.0 391.1 L305.0 391.1 L306.0 391.1 L307.0 391.1 L308.0 391.1 L309.0 391.1 L310.0 391.1 L311.0 391.1 L312.0 391.1 L313.0 391.1 L314.0 391.1 L315.0 391.1 L316.0 391.1 L317.0 391.1 L318.0 391.1 L319.0 391.1 L320.0 391.1 L321.0 391.1 L322.0 391.1 L323.0 391.1 L324.0 391.1 L325.0 391.1 L326.0 391.1 L327.0 391.1 L328.0 391.1 L329.0 391.1 L330.0 391.1 L331.0 391.1 L332.0 391.1 L333.0 391.1 L334.0 391.1 L335.0 391.1 L336.0 391.1 L337.0 391.1 L338.0 391.1 L339.0 391.1 L340.0 391.1 L341.0 391.1 L342.0 391.1 L343.0 391.2 L344.0 391.4 L345.0 391.6 L346.0 391.8 L347.0 392.0 L348.0 392.3 L349.0 392.7 L350.0 393.3 L351.0 394.0 L352.0 394.9 L353.0 396.1 L354.0 397.5 L355.0 398.9 L356.0 400.5 L357.0 402.2 L358.0 404.0 L359.0 406.0 L360.0 408.1 L361.0 410.1 L362.0 412.1 L363.0 414.0 L364.0 416.0 L365.0 418.1 L366.0 420.3 L367.0 422.2 L368.0 423.6 L369.0 424.7 L370.0 425.5 L371.0 426.2 L372.0 426.9 L373.0 427.6 L374.0 428.1 L375.0 428.4 L376.0 428.6 L377.0 428.8 L378.0 429.0 L379.0 429.2 L380.0 429.4 L381.0 429.5 L382.0 429.7 L383.0 429.9 L384.0 430.0 L385.0 430.2 L386.0 430.3 L387.0 430.5 L388.0 430.6 L389.0 430.7 L390.0 430.8 L391.0 430.9 L392.0 431.0 L393.0 431.1 L394.0 431.2 L395.0 431.3 L396.0 431.4 L397.0 431.5 L398.0 431.6 L399.0 431.7 L400.0 431.8 L401.0 431.9 L402.0 432.0 L403.0 432.1 L404.0 432.2 L405.0 432.3 L406.0 432.4 L407.0 432.5 L408.0 432.6 L409.0 432.6 L410.0 432.7 L411.0 432.8 L412.0 432.8 L413.0 432.9 L414.0 433.0 L415.0 433.0 L416.0 433.1 L417.0 433.1 L418.0 433.2 L419.0 433.2 L420.0 433.3 L421.0 433.3 L422.0 433.3 L423.0 433.4 L424.0 432.9 L425.0 430.3 L426.0 427.7 L427.0 425.1 L428.0 422.5 L429.0 419.9 L430.0 417.3 L431.0 414.7 L432.0 412.3 L433.0 410.0 L434.0 407.8 L435.0 405.6 L436.0 403.6 L437.0 401.8 L438.0 400.4 L439.0 399.0 L440.0 397.8 L441.0 396.8 L442.0 395.9 L443.0 395.2 L444.0 394.6 L445.0 394.0 L446.0 393.6 L447.0 393.2 L448.0 392.9 L449.0 392.6 L450.0 392.3 L451.0 392.1 L452.0 392.0 L453.0 391.8 L454.0 391.7 L455.0 391.5 L456.0 391.4 L457.0 391.3 L458.0 391.3 L459.0 391.3 L460.0 391.2 L461.0 391.2 L462.0 391.2 L463.0 391.2 L464.0 391.1 L465.0 391.1 L466.0 391.1 L467.0 391.1 L468.0 391.1 L469.0 391.1 L470.0 391.1 L471.0 391.1 L472.0 391.1 L473.0 391.1 L474.0 391.1 L475.0 391.1 L476.0 391.1 L477.0 391.1 L478.0 391.1 L479.0 391.1 L480.0 391.1 L481.0 391.1 L482.0 391.1 L483.0 391.1 L484.0 391.1 L485.0 391.1 L486.0 391.1 L487.0 391.1 L488.0 391.1 L489.0 391.1 L490.0 391.1 L491.0 391.1 L492.0 391.1 L493.0 391.1 L494.0 391.1 L495.0 391.1 L496.0 391.1 L497.0 391.1 L498.0 391.1 L499.0 391.1 L500.0 391.1 L501.0 391.1 L502.0 391.1 L503.0 391.1 L504.0 391.1 L505.0 391.1 L506.0 391.1 L507.0 391.1 L508.0 391.1 L509.0 391.1 L510.0 391.1 L511.0 391.1 L512.0 391.1 L513.0 391.1 L514.0 391.1 L515.0 391.1 L516.0 391.1 L517.0 391.1 L518.0 391.1 L519.0 391.1 L520.0 391.1 L521.0 391.1 L522.0 391.1 L523.0 391.1 L524.0 391.1 L525.0 391.1 L526.0 391.1 L527.0 391.1 L528.0 391.1 L529.0 391.1 L530.0 391.1 L531.0 391.2 L532.0 391.4 L533.0 391.5 L534.0 391.8 L535.0 392.0 L536.0 392.3 L537.0 392.7 L538.0 393.2 L539.0 394.0 L540.0 394.8 L541.0 396.0 L542.0 397.4 L543.0 398.8 L544.0 400.3 L545.0 402.0 L546.0 403.8 L547.0 405.8 L548.0 407.9 L549.0 409.9 L550.0 411.9 L551.0 413.8 L552.0 415.8 L553.0 417.9 L554.0 420.1 L555.0 422.0 L556.0 423.4 L557.0 424.6 L558.0 425.5 L559.0 426.2 L560.0 426.8 L561.0 427.6 L562.0 428.1 L563.0 428.4 L564.0 428.6 L565.0 428.8 L566.0 429.0 L567.0 429.2 L568.0 429.3 L569.0 429.5 L570.0 429.7 L571.0 429.9 L572.0 430.0 L573.0 430.2 L574.0 430.3 L575.0 430.5 L576.0 430.6 L577.0 430.7 L578.0 430.8 L579.0 430.9 L580.0 431.0 L581.0 431.1 L582.0 431.2 L583.0 431.3 L584.0 431.4 L585.0 431.5 L586.0 431.6 L587.0 431.7 L588.0 431.8 L589.0 431.9 L590.0 432.0 L591.0 432.1 L592.0 432.2 L593.0 432.3 L594.0 432.4 L595.0 432.5 L596.0 432.6 L597.0 432.6 L598.0 432.7 L599.0 432.8 L600.0 432.8 L601.0 432.9 L602.0 432.9 L603.0 433.0 L604.0 433.1 L605.0 433.1 L606.0 433.2 L607.0 433.2 L608.0 433.3 L609.0 433.3 L610.0 433.3 L611.0 433.4 L612.0 433.1 L613.0 430.5 L614.0 427.9 L615.0 425.4 L616.0 422.8 L617.0 420.2 L618.0 417.5 L619.0 415.0 L620.0 412.5 L621.0 410.2 L622.0 408.0 L623.0 405.8 L624.0 403.8 L625.0 402.0 L626.0 400.5 L627.0 399.2 L628.0 398.0 L629.0 396.9 L630.0 396.0 L631.0 395.3 L632.0 394.6 L633.0 394.1 L634.0 393.6 L635.0 393.2 L636.0 392.9 L637.0 392.6 L638.0 392.4 L639.0 392.2 L640.0 392.0 L641.0 391.8 L642.0 391.7 L643.0 391.5 L644.0 391.4 L645.0 391.3 L646.0 391.3 L647.0 391.3 L648.0 391.2 L649.0 391.2 L650.0 391.2 L651.0 391.2 L652.0 391.1 L653.0 391.1 L654.0 391.1 L655.0 391.1 L656.0 391.1 L657.0 391.1 L658.0 391.1 L659.0 391.1 L660.0 391.1 L661.0 391.1 L662.0 391.1 L663.0 391.1 L664.0 391.1 L665.0 391.1 L666.0 391.1 L667.0 391.1 L668.0 391.1 L669.0 391.1 L670.0 391.1 L671.0 391.1 L672.0 391.1 L673.0 391.1 L674.0 391.1 L675.0 391.1 L676.0 391.1 L677.0 391.1 L678.0 391.1 L679.0 391.1 L680.0 391.1 L681.0 391.1 L682.0 391.1 L683.0 391.1 L684.0 391.1 L685.0 391.1 L686.0 391.1 L687.0 391.1 L688.0 391.1 L689.0 391.1 L690.0 391.1 L691.0 391.1 L692.0 391.1 L693.0 391.1 L694.0 391.1 L695.0 391.1 L696.0 391.1 L697.0 391.1 L698.0 391.1 L699.0 391.1 L700.0 391.1 L701.0 391.1 L702.0 391.1 L703.0 391.1 L704.0 391.1 L705.0 391.1 L706.0 391.1 L707.0 391.1 L708.0 391.1 L709.0 391.1 L710.0 391.1 L711.0 391.1 L712.0 391.1 L713.0 391.1 L714.0 391.1 L715.0 391.1 L716.0 391.1 L717.0 391.1 L718.0 391.1 L719.0 391.2 L720.0 391.4 L721.0 391.5 L722.0 391.7 L723.0 392.0 L724.0 392.2 L725.0 392.6 L726.0 393.2 L727.0 393.9 L728.0 394.7 L728.5 433.4Z" fill="#8ef1e9" fill-opacity="0.98" clip-path="url(#wc)"/>
<path d="M50.00 450.6 L50.75 451.0 L51.50 451.4 L52.25 451.7 L53.00 452.1 L53.75 452.4 L54.50 452.8 L55.25 453.1 L56.00 453.5 L56.75 453.8 L57.50 454.2 L58.25 454.5 L59.00 454.8 L59.75 455.1 L60.50 455.4 L61.25 455.7 L62.00 456.0 L62.75 456.3 L63.50 456.6 L64.25 456.9 L65.00 457.2 L65.75 457.5 L66.50 457.7 L67.25 458.0 L68.00 458.3 L68.75 458.5 L69.50 458.8 L70.25 459.0 L71.00 459.2 L71.75 459.5 L72.50 459.7 L73.25 459.9 L74.00 460.2 L74.75 460.4 L75.50 460.6 L76.25 460.8 L77.00 461.0 L77.75 461.2 L78.50 461.4 L79.25 461.6 L80.00 461.8 L80.75 462.0 L81.50 462.2 L82.25 462.4 L83.00 462.5 L83.75 462.7 L84.50 462.9 L85.25 463.0 L86.00 463.2 L86.75 463.4 L87.50 463.5 L88.25 463.7 L89.00 463.8 L89.75 464.0 L90.50 464.1 L91.25 464.3 L92.00 464.4 L92.75 464.6 L93.50 464.7 L94.25 464.8 L95.00 465.0 L95.75 465.1 L96.50 465.2 L97.25 465.4 L98.00 465.5 L98.75 465.6 L99.50 465.7 L100.25 465.8 L101.00 465.9 L101.75 466.0 L102.50 466.1 L103.25 466.2 L104.00 466.2 L104.75 466.3 L105.50 466.4 L106.25 466.5 L107.00 466.5 L107.75 466.6 L108.50 466.7 L109.25 466.7 L110.00 466.4 L110.75 466.0 L111.50 465.4 L112.25 464.6 L113.00 463.8 L113.75 462.4 L114.50 460.6 L115.25 458.6 L116.00 456.5 L116.75 454.5 L117.50 452.7 L118.25 450.7 L119.00 448.7 L119.75 446.7 L120.50 444.9 L121.25 443.4 L122.00 442.4 L122.75 441.7 L123.50 441.1 L124.25 440.7 L125.00 440.6 L125.75 440.5 L126.50 440.6 L127.25 440.9 L128.00 441.4 L128.75 442.0 L129.50 442.7 L130.25 443.4 L131.00 444.1 L131.75 444.8 L132.50 445.6 L133.25 446.3 L134.00 447.0 L134.75 447.7 L135.50 448.2 L136.25 448.7 L137.00 449.2 L137.75 449.6 L138.50 450.1 L139.25 450.5 L140.00 450.9 L140.75 451.2 L141.50 451.6 L142.25 452.0 L143.00 452.3 L143.75 452.7 L144.50 453.0 L145.25 453.4 L146.00 453.7 L146.75 454.0 L147.50 454.4 L148.25 454.7 L149.00 455.0 L149.75 455.3 L150.50 455.6 L151.25 455.9 L152.00 456.2 L152.75 456.5 L153.50 456.8 L154.25 457.1 L155.00 457.4 L155.75 457.7 L156.50 457.9 L157.25 458.2 L158.00 458.4 L158.75 458.7 L159.50 458.9 L160.25 459.2 L161.00 459.4 L161.75 459.6 L162.50 459.9 L163.25 460.1 L164.00 460.3 L164.75 460.5 L165.50 460.7 L166.25 460.9 L167.00 461.2 L167.75 461.4 L168.50 461.6 L169.25 461.7 L170.00 461.9 L170.75 462.1 L171.50 462.3 L172.25 462.5 L173.00 462.7 L173.75 462.8 L174.50 463.0 L175.25 463.2 L176.00 463.3 L176.75 463.5 L177.50 463.6 L178.25 463.8 L179.00 463.9 L179.75 464.1 L180.50 464.2 L181.25 464.4 L182.00 464.5 L182.75 464.7 L183.50 464.8 L184.25 464.9 L185.00 465.1 L185.75 465.2 L186.50 465.3 L187.25 465.4 L188.00 465.5 L188.75 465.7 L189.50 465.8 L190.25 465.9 L191.00 465.9 L191.75 466.0 L192.50 466.1 L193.25 466.2 L194.00 466.3 L194.75 466.4 L195.50 466.4 L196.25 466.5 L197.00 466.6 L197.75 466.6 L198.50 466.7 L199.25 466.6 L200.00 466.2 L200.75 465.6 L201.50 464.9 L202.25 464.1 L203.00 462.9 L203.75 461.2 L204.50 459.3 L205.25 457.2 L206.00 455.2 L206.75 453.3 L207.50 451.4 L208.25 449.4 L209.00 447.3 L209.75 445.4 L210.50 443.8 L211.25 442.7 L212.00 441.9 L212.75 441.3 L213.50 440.8 L214.25 440.6 L215.00 440.5 L215.75 440.6 L216.50 440.8 L217.25 441.2 L218.00 441.8 L218.75 442.5 L219.50 443.1 L220.25 443.8 L221.00 444.6 L221.75 445.3 L222.50 446.1 L223.25 446.8 L224.00 447.5 L224.75 448.0 L225.50 448.5 L226.25 449.0 L227.00 449.5 L227.75 449.9 L228.50 450.3 L229.25 450.7 L230.00 451.1 L230.75 451.5 L231.50 451.9 L232.25 452.2 L233.00 452.6 L233.75 452.9 L234.50 453.3 L235.25 453.6 L236.00 453.9 L236.75 454.3 L237.50 454.6 L238.25 454.9 L239.00 455.2 L239.75 455.5 L240.50 455.8 L241.25 456.1 L242.00 456.4 L242.75 456.7 L243.50 457.0 L244.25 457.3 L245.00 457.6 L245.75 457.8 L246.50 458.1 L247.25 458.4 L248.00 458.6 L248.75 458.9 L249.50 459.1 L250.25 459.3 L251.00 459.6 L251.75 459.8 L252.50 460.0 L253.25 460.2 L254.00 460.5 L254.75 460.7 L255.50 460.9 L256.25 461.1 L257.00 461.3 L257.75 461.5 L258.50 461.7 L259.25 461.9 L260.00 462.1 L260.75 462.2 L261.50 462.4 L262.25 462.6 L263.00 462.8 L263.75 462.9 L264.50 463.1 L265.25 463.3 L266.00 463.4 L266.75 463.6 L267.50 463.7 L268.25 463.9 L269.00 464.0 L269.75 464.2 L270.50 464.3 L271.25 464.5 L272.00 464.6 L272.75 464.8 L273.50 464.9 L274.25 465.0 L275.00 465.1 L275.75 465.3 L276.50 465.4 L277.25 465.5 L278.00 465.6 L278.75 465.7 L279.50 465.8 L280.25 465.9 L281.00 466.0 L281.75 466.1 L282.50 466.2 L283.25 466.3 L284.00 466.3 L284.75 466.4 L285.50 466.5 L286.25 466.6 L287.00 466.6 L287.75 466.7 L288.50 466.6 L289.25 466.3 L290.00 465.8 L290.75 465.1 L291.50 464.4 L292.25 463.4 L293.00 461.8 L293.75 459.9 L294.50 457.9 L295.25 455.8 L296.00 453.9 L296.75 452.0 L297.50 450.0 L298.25 448.0 L299.00 446.0 L299.75 444.3 L300.50 443.0 L301.25 442.1 L302.00 441.5 L302.75 441.0 L303.50 440.7 L304.25 440.5 L305.00 440.5 L305.75 440.7 L306.50 441.0 L307.25 441.6 L308.00 442.3 L308.75 442.9 L309.50 443.6 L310.25 444.3 L311.00 445.1 L311.75 445.8 L312.50 446.6 L313.25 447.3 L314.00 447.9 L314.75 448.4 L315.50 448.9 L316.25 449.3 L317.00 449.8 L317.75 450.2 L318.50 450.6 L319.25 451.0 L320.00 451.4 L320.75 451.7 L321.50 452.1 L322.25 452.4 L323.00 452.8 L323.75 453.1 L324.50 453.5 L325.25 453.8 L326.00 454.2 L326.75 454.5 L327.50 454.8 L328.25 455.1 L329.00 455.4 L329.75 455.7 L330.50 456.0 L331.25 456.3 L332.00 456.6 L332.75 456.9 L333.50 457.2 L334.25 457.5 L335.00 457.7 L335.75 458.0 L336.50 458.3 L337.25 458.5 L338.00 458.8 L338.75 459.0 L339.50 459.2 L340.25 459.5 L341.00 459.7 L341.75 459.9 L342.50 460.2 L343.25 460.4 L344.00 460.6 L344.75 460.8 L345.50 461.0 L346.25 461.2 L347.00 461.4 L347.75 461.6 L348.50 461.8 L349.25 462.0 L350.00 462.2 L350.75 462.4 L351.50 462.5 L352.25 462.7 L353.00 462.9 L353.75 463.0 L354.50 463.2 L355.25 463.4 L356.00 463.5 L356.75 463.7 L357.50 463.8 L358.25 464.0 L359.00 464.1 L359.75 464.3 L360.50 464.4 L361.25 464.6 L362.00 464.7 L362.75 464.8 L363.50 465.0 L364.25 465.1 L365.00 465.2 L365.75 465.4 L366.50 465.5 L367.25 465.6 L368.00 465.7 L368.75 465.8 L369.50 465.9 L370.25 466.0 L371.00 466.1 L371.75 466.2 L372.50 466.2 L373.25 466.3 L374.00 466.4 L374.75 466.5 L375.50 466.5 L376.25 466.6 L377.00 466.7 L377.75 466.7 L378.50 466.4 L379.25 466.0 L380.00 465.4 L380.75 464.6 L381.50 463.8 L382.25 462.4 L383.00 460.6 L383.75 458.6 L384.50 456.5 L385.25 454.5 L386.00 452.7 L386.75 450.7 L387.50 448.7 L388.25 446.7 L389.00 444.9 L389.75 443.4 L390.50 442.4 L391.25 441.7 L392.00 441.1 L392.75 440.7 L393.50 440.6 L394.25 440.5 L395.00 440.6 L395.75 440.9 L396.50 441.4 L397.25 442.0 L398.00 442.7 L398.75 443.4 L399.50 444.1 L400.25 444.8 L401.00 445.6 L401.75 446.3 L402.50 447.0 L403.25 447.7 L404.00 448.2 L404.75 448.7 L405.50 449.2 L406.25 449.6 L407.00 450.1 L407.75 450.5 L408.50 450.9 L409.25 451.2 L410.00 451.6 L410.75 452.0 L411.50 452.3 L412.25 452.7 L413.00 453.0 L413.75 453.4 L414.50 453.7 L415.25 454.0 L416.00 454.4 L416.75 454.7 L417.50 455.0 L418.25 455.3 L419.00 455.6 L419.75 455.9 L420.50 456.2 L421.25 456.5 L422.00 456.8 L422.75 457.1 L423.50 457.4 L424.25 457.7 L425.00 457.9 L425.75 458.2 L426.50 458.4 L427.25 458.7 L428.00 458.9 L428.75 459.2 L429.50 459.4 L430.25 459.6 L431.00 459.9 L431.75 460.1 L432.50 460.3 L433.25 460.5 L434.00 460.7 L434.75 460.9 L435.50 461.2 L436.25 461.4 L437.00 461.6 L437.75 461.7 L438.50 461.9 L439.25 462.1 L440.00 462.3 L440.75 462.5 L441.50 462.7 L442.25 462.8 L443.00 463.0 L443.75 463.2 L444.50 463.3 L445.25 463.5 L446.00 463.6 L446.75 463.8 L447.50 463.9 L448.25 464.1 L449.00 464.2 L449.75 464.4 L450.50 464.5 L451.25 464.7 L452.00 464.8 L452.75 464.9 L453.50 465.1 L454.25 465.2 L455.00 465.3 L455.75 465.4 L456.50 465.5 L457.25 465.7 L458.00 465.8 L458.75 465.9 L459.50 465.9 L460.25 466.0 L461.00 466.1 L461.75 466.2 L462.50 466.3 L463.25 466.4 L464.00 466.4 L464.75 466.5 L465.50 466.6 L466.25 466.6 L467.00 466.7 L467.75 466.6 L468.50 466.2 L469.25 465.6 L470.00 464.9 L470.75 464.1 L471.50 462.9 L472.25 461.2 L473.00 459.3 L473.75 457.2 L474.50 455.2 L475.25 453.3 L476.00 451.4 L476.75 449.4 L477.50 447.3 L478.25 445.4 L479.00 443.8 L479.75 442.7 L480.50 441.9 L481.25 441.3 L482.00 440.8 L482.75 440.6 L483.50 440.5 L484.25 440.6 L485.00 440.8 L485.75 441.2 L486.50 441.8 L487.25 442.5 L488.00 443.1 L488.75 443.8 L489.50 444.6 L490.25 445.3 L491.00 446.1 L491.75 446.8 L492.50 447.5 L493.25 448.0 L494.00 448.5 L494.75 449.0 L495.50 449.5 L496.25 449.9 L497.00 450.3 L497.75 450.7 L498.50 451.1 L499.25 451.5 L500.00 451.9 L500.75 452.2 L501.50 452.6 L502.25 452.9 L503.00 453.3 L503.75 453.6 L504.50 453.9 L505.25 454.3 L506.00 454.6 L506.75 454.9 L507.50 455.2 L508.25 455.5 L509.00 455.8 L509.75 456.1 L510.50 456.4 L511.25 456.7 L512.00 457.0 L512.75 457.3 L513.50 457.6 L514.25 457.8 L515.00 458.1 L515.75 458.4 L516.50 458.6 L517.25 458.9 L518.00 459.1 L518.75 459.3 L519.50 459.6 L520.25 459.8 L521.00 460.0 L521.75 460.2 L522.50 460.5 L523.25 460.7 L524.00 460.9 L524.75 461.1 L525.50 461.3 L526.25 461.5 L527.00 461.7 L527.75 461.9 L528.50 462.1 L529.25 462.2 L530.00 462.4 L530.75 462.6 L531.50 462.8 L532.25 462.9 L533.00 463.1 L533.75 463.3 L534.50 463.4 L535.25 463.6 L536.00 463.7 L536.75 463.9 L537.50 464.0 L538.25 464.2 L539.00 464.3 L539.75 464.5 L540.50 464.6 L541.25 464.8 L542.00 464.9 L542.75 465.0 L543.50 465.1 L544.25 465.3 L545.00 465.4 L545.75 465.5 L546.50 465.6 L547.25 465.7 L548.00 465.8 L548.75 465.9 L549.50 466.0 L550.25 466.1 L551.00 466.2 L551.75 466.3 L552.50 466.3 L553.25 466.4 L554.00 466.5 L554.75 466.6 L555.50 466.6 L556.25 466.7 L557.00 466.6 L557.75 466.3 L558.50 465.8 L559.25 465.1 L560.00 464.4 L560.75 463.4 L561.50 461.8 L562.25 459.9 L563.00 457.9 L563.75 455.8 L564.50 453.9 L565.25 452.0 L566.00 450.0 L566.75 448.0 L567.50 446.0 L568.25 444.3 L569.00 443.0 L569.75 442.1 L570.50 441.5 L571.25 441.0 L572.00 440.7 L572.75 440.5 L573.50 440.5 L574.25 440.7 L575.00 441.0 L575.75 441.6 L576.50 442.3 L577.25 442.9 L578.00 443.6 L578.75 444.3 L579.50 445.1 L580.25 445.8 L581.00 446.6 L581.75 447.3 L582.50 447.9 L583.25 448.4 L584.00 448.9 L584.75 449.3 L585.50 449.8 L586.25 450.2 L587.00 450.6 L587.75 451.0 L588.50 451.4 L589.25 451.7 L590.00 452.1 L590.75 452.4 L591.50 452.8 L592.25 453.1 L593.00 453.5 L593.75 453.8 L594.50 454.2 L595.25 454.5 L596.00 454.8 L596.75 455.1 L597.50 455.4 L598.25 455.7 L599.00 456.0 L599.75 456.3 L600.50 456.6 L601.25 456.9 L602.00 457.2 L602.75 457.5 L603.50 457.7 L604.25 458.0 L605.00 458.3 L605.75 458.5 L606.50 458.8 L607.25 459.0 L608.00 459.2 L608.75 459.5 L609.50 459.7 L610.25 459.9 L611.00 460.2 L611.75 460.4 L612.50 460.6 L613.25 460.8 L614.00 461.0 L614.75 461.2 L615.50 461.4 L616.25 461.6 L617.00 461.8 L617.75 462.0 L618.50 462.2 L619.25 462.4 L620.00 462.5 L620.75 462.7 L621.50 462.9 L622.25 463.0 L623.00 463.2 L623.75 463.4 L624.50 463.5 L625.25 463.7 L626.00 463.8 L626.75 464.0 L627.50 464.1 L628.25 464.3 L629.00 464.4 L629.75 464.6 L630.50 464.7 L631.25 464.8 L632.00 465.0 L632.75 465.1 L633.50 465.2 L634.25 465.4 L635.00 465.5 L635.75 465.6 L636.50 465.7 L637.25 465.8 L638.00 465.9 L638.75 466.0 L639.50 466.1 L640.25 466.2 L641.00 466.2 L641.75 466.3 L642.50 466.4 L643.25 466.5 L644.00 466.5 L644.75 466.6 L645.50 466.7 L646.25 466.7 L647.00 466.4 L647.75 466.0 L648.50 465.4 L649.25 464.6 L650.00 463.8 L650.75 462.4 L651.50 460.6 L652.25 458.6 L653.00 456.5 L653.75 454.5 L654.50 452.7 L655.25 450.7 L656.00 448.7 L656.75 446.7 L657.50 444.9 L658.25 443.4 L659.00 442.4 L659.75 441.7 L660.50 441.1 L661.25 440.7 L662.00 440.6 L662.75 440.5 L663.50 440.6 L664.25 440.9 L665.00 441.4 L665.75 442.0 L666.50 442.7 L667.25 443.4 L668.00 444.1 L668.75 444.8 L669.50 445.6 L670.25 446.3 L671.00 447.0 L671.75 447.7 L672.50 448.2 L673.25 448.7 L674.00 449.2 L674.75 449.6 L675.50 450.1 L676.25 450.5 L677.00 450.9 L677.75 451.2 L678.50 451.6 L679.25 452.0 L680.00 452.3 L680.75 452.7 L681.50 453.0 L682.25 453.4 L683.00 453.7 L683.75 454.0 L684.50 454.4 L685.25 454.7 L686.00 455.0 L686.75 455.3 L687.50 455.6 L688.25 455.9 L689.00 456.2 L689.75 456.5 L690.50 456.8 L691.25 457.1 L692.00 457.4 L692.75 457.7 L693.50 457.9 L694.25 458.2 L695.00 458.4 L695.75 458.7 L696.50 458.9 L697.25 459.2 L698.00 459.4 L698.75 459.6 L699.50 459.9 L700.25 460.1 L701.00 460.3 L701.75 460.5 L702.50 460.7 L703.25 460.9 L704.00 461.2 L704.75 461.4 L705.50 461.6 L706.25 461.7 L707.00 461.9 L707.75 462.1 L708.50 462.3 L709.25 462.5 L710.00 462.7 L710.75 462.8 L711.50 463.0 L712.25 463.2 L713.00 463.3 L713.75 463.5 L714.50 463.6 L715.25 463.8 L716.00 463.9 L716.75 464.1 L717.50 464.2 L718.25 464.4 L719.00 464.5 L719.75 464.7 L720.50 464.8 L721.25 464.9 L722.00 465.1 L722.75 465.2 L723.50 465.3 L724.25 465.4 L725.00 465.5 L725.75 465.7 L726.50 465.8 L727.25 465.9 L728.00 465.9" stroke="#a8a800" stroke-width="1.25" fill="none" stroke-linejoin="round" clip-path="url(#wc)"/>
<path d="M50.00 496.1 L50.75 496.4 L51.50 496.7 L52.25 496.9 L53.00 497.1 L53.75 497.4 L54.50 497.6 L55.25 497.8 L56.00 497.9 L56.75 498.1 L57.50 498.2 L58.25 498.4 L59.00 498.5 L59.75 498.6 L60.50 498.7 L61.25 498.8 L62.00 498.9 L62.75 498.9 L63.50 498.9 L64.25 498.9 L65.00 498.9 L65.75 498.9 L66.50 498.9 L67.25 498.8 L68.00 498.8 L68.75 498.7 L69.50 498.7 L70.25 498.6 L71.00 498.5 L71.75 498.4 L72.50 498.3 L73.25 498.2 L74.00 498.1 L74.75 497.9 L75.50 497.7 L76.25 497.4 L77.00 497.1 L77.75 496.8 L78.50 496.5 L79.25 496.1 L80.00 495.7 L80.75 495.2 L81.50 494.6 L82.25 494.0 L83.00 493.2 L83.75 492.5 L84.50 491.8 L85.25 491.1 L86.00 490.4 L86.75 489.8 L87.50 489.1 L88.25 488.4 L89.00 487.7 L89.75 487.1 L90.50 486.5 L91.25 486.0 L92.00 485.5 L92.75 485.2 L93.50 484.9 L94.25 484.6 L95.00 484.3 L95.75 484.1 L96.50 483.9 L97.25 483.7 L98.00 483.6 L98.75 483.7 L99.50 483.9 L100.25 484.1 L101.00 484.3 L101.75 484.6 L102.50 484.8 L103.25 485.1 L104.00 485.4 L104.75 485.7 L105.50 486.1 L106.25 486.4 L107.00 486.9 L107.75 487.3 L108.50 487.8 L109.25 488.2 L110.00 488.7 L110.75 489.1 L111.50 489.5 L112.25 489.9 L113.00 490.2 L113.75 490.5 L114.50 490.8 L115.25 491.0 L116.00 491.2 L116.75 491.5 L117.50 491.7 L118.25 492.0 L119.00 492.2 L119.75 492.5 L120.50 492.8 L121.25 493.1 L122.00 493.5 L122.75 493.9 L123.50 494.3 L124.25 494.8 L125.00 495.2 L125.75 495.6 L126.50 496.0 L127.25 496.3 L128.00 496.6 L128.75 496.8 L129.50 497.0 L130.25 497.3 L131.00 497.5 L131.75 497.7 L132.50 497.9 L133.25 498.0 L134.00 498.2 L134.75 498.3 L135.50 498.4 L136.25 498.5 L137.00 498.6 L137.75 498.7 L138.50 498.8 L139.25 498.9 L140.00 498.9 L140.75 498.9 L141.50 498.9 L142.25 498.9 L143.00 498.9 L143.75 498.9 L144.50 498.8 L145.25 498.7 L146.00 498.7 L146.75 498.6 L147.50 498.5 L148.25 498.4 L149.00 498.4 L149.75 498.3 L150.50 498.2 L151.25 498.0 L152.00 497.8 L152.75 497.6 L153.50 497.3 L154.25 497.0 L155.00 496.6 L155.75 496.2 L156.50 495.9 L157.25 495.4 L158.00 494.9 L158.75 494.2 L159.50 493.5 L160.25 492.8 L161.00 492.1 L161.75 491.3 L162.50 490.7 L163.25 490.0 L164.00 489.4 L164.75 488.7 L165.50 488.0 L166.25 487.3 L167.00 486.7 L167.75 486.2 L168.50 485.7 L169.25 485.3 L170.00 485.0 L170.75 484.7 L171.50 484.4 L172.25 484.2 L173.00 484.0 L173.75 483.8 L174.50 483.7 L175.25 483.6 L176.00 483.8 L176.75 484.0 L177.50 484.2 L178.25 484.5 L179.00 484.7 L179.75 485.0 L180.50 485.3 L181.25 485.6 L182.00 485.9 L182.75 486.3 L183.50 486.7 L184.25 487.1 L185.00 487.6 L185.75 488.1 L186.50 488.5 L187.25 489.0 L188.00 489.4 L188.75 489.8 L189.50 490.1 L190.25 490.4 L191.00 490.7 L191.75 490.9 L192.50 491.1 L193.25 491.4 L194.00 491.6 L194.75 491.9 L195.50 492.1 L196.25 492.4 L197.00 492.7 L197.75 493.0 L198.50 493.3 L199.25 493.7 L200.00 494.2 L200.75 494.6 L201.50 495.0 L202.25 495.4 L203.00 495.8 L203.75 496.2 L204.50 496.5 L205.25 496.7 L206.00 497.0 L206.75 497.2 L207.50 497.4 L208.25 497.6 L209.00 497.8 L209.75 498.0 L210.50 498.1 L211.25 498.3 L212.00 498.4 L212.75 498.5 L213.50 498.6 L214.25 498.7 L215.00 498.8 L215.75 498.9 L216.50 498.9 L217.25 498.9 L218.00 498.9 L218.75 498.9 L219.50 498.9 L220.25 498.9 L221.00 498.8 L221.75 498.8 L222.50 498.7 L223.25 498.6 L224.00 498.6 L224.75 498.5 L225.50 498.4 L226.25 498.3 L227.00 498.2 L227.75 498.1 L228.50 497.9 L229.25 497.7 L230.00 497.4 L230.75 497.1 L231.50 496.7 L232.25 496.4 L233.00 496.0 L233.75 495.6 L234.50 495.1 L235.25 494.5 L236.00 493.8 L236.75 493.1 L237.50 492.4 L238.25 491.6 L239.00 490.9 L239.75 490.3 L240.50 489.6 L241.25 488.9 L242.00 488.3 L242.75 487.6 L243.50 486.9 L244.25 486.4 L245.00 485.9 L245.75 485.5 L246.50 485.1 L247.25 484.8 L248.00 484.5 L248.75 484.3 L249.50 484.0 L250.25 483.9 L251.00 483.7 L251.75 483.6 L252.50 483.7 L253.25 483.9 L254.00 484.1 L254.75 484.4 L255.50 484.6 L256.25 484.9 L257.00 485.2 L257.75 485.5 L258.50 485.8 L259.25 486.1 L260.00 486.5 L260.75 487.0 L261.50 487.4 L262.25 487.9 L263.00 488.3 L263.75 488.8 L264.50 489.2 L265.25 489.6 L266.00 490.0 L266.75 490.3 L267.50 490.5 L268.25 490.8 L269.00 491.1 L269.75 491.3 L270.50 491.5 L271.25 491.8 L272.00 492.0 L272.75 492.3 L273.50 492.5 L274.25 492.8 L275.00 493.2 L275.75 493.6 L276.50 494.0 L277.25 494.4 L278.00 494.8 L278.75 495.3 L279.50 495.7 L280.25 496.0 L281.00 496.3 L281.75 496.6 L282.50 496.9 L283.25 497.1 L284.00 497.3 L284.75 497.5 L285.50 497.7 L286.25 497.9 L287.00 498.1 L287.75 498.2 L288.50 498.4 L289.25 498.5 L290.00 498.6 L290.75 498.7 L291.50 498.8 L292.25 498.8 L293.00 498.9 L293.75 498.9 L294.50 498.9 L295.25 498.9 L296.00 498.9 L296.75 498.9 L297.50 498.8 L298.25 498.8 L299.00 498.7 L299.75 498.7 L300.50 498.6 L301.25 498.5 L302.00 498.4 L302.75 498.3 L303.50 498.2 L304.25 498.1 L305.00 498.0 L305.75 497.8 L306.50 497.5 L307.25 497.2 L308.00 496.9 L308.75 496.5 L309.50 496.2 L310.25 495.8 L311.00 495.3 L311.75 494.7 L312.50 494.1 L313.25 493.4 L314.00 492.7 L314.75 491.9 L315.50 491.2 L316.25 490.5 L317.00 489.9 L317.75 489.2 L318.50 488.5 L319.25 487.8 L320.00 487.2 L320.75 486.6 L321.50 486.1 L322.25 485.6 L323.00 485.3 L323.75 485.0 L324.50 484.7 L325.25 484.4 L326.00 484.1 L326.75 483.9 L327.50 483.8 L328.25 483.6 L329.00 483.6 L329.75 483.8 L330.50 484.1 L331.25 484.3 L332.00 484.5 L332.75 484.8 L333.50 485.1 L334.25 485.4 L335.00 485.7 L335.75 486.0 L336.50 486.4 L337.25 486.8 L338.00 487.2 L338.75 487.7 L339.50 488.1 L340.25 488.6 L341.00 489.0 L341.75 489.5 L342.50 489.8 L343.25 490.1 L344.00 490.4 L344.75 490.7 L345.50 491.0 L346.25 491.2 L347.00 491.4 L347.75 491.7 L348.50 491.9 L349.25 492.2 L350.00 492.4 L350.75 492.7 L351.50 493.1 L352.25 493.4 L353.00 493.8 L353.75 494.2 L354.50 494.7 L355.25 495.1 L356.00 495.5 L356.75 495.9 L357.50 496.2 L358.25 496.5 L359.00 496.8 L359.75 497.0 L360.50 497.2 L361.25 497.4 L362.00 497.6 L362.75 497.8 L363.50 498.0 L364.25 498.2 L365.00 498.3 L365.75 498.4 L366.50 498.5 L367.25 498.6 L368.00 498.7 L368.75 498.8 L369.50 498.9 L370.25 498.9 L371.00 499.0 L371.75 498.9 L372.50 498.9 L373.25 498.9 L374.00 498.9 L374.75 498.8 L375.50 498.8 L376.25 498.7 L377.00 498.6 L377.75 498.5 L378.50 498.5 L379.25 498.4 L380.00 498.3 L380.75 498.2 L381.50 498.0 L382.25 497.8 L383.00 497.6 L383.75 497.3 L384.50 497.0 L385.25 496.7 L386.00 496.3 L386.75 495.9 L387.50 495.5 L388.25 495.0 L389.00 494.4 L389.75 493.7 L390.50 492.9 L391.25 492.2 L392.00 491.5 L392.75 490.8 L393.50 490.1 L394.25 489.5 L395.00 488.8 L395.75 488.1 L396.50 487.5 L397.25 486.8 L398.00 486.3 L398.75 485.8 L399.50 485.4 L400.25 485.1 L401.00 484.8 L401.75 484.5 L402.50 484.2 L403.25 484.0 L404.00 483.8 L404.75 483.7 L405.50 483.6 L406.25 483.8 L407.00 484.0 L407.75 484.2 L408.50 484.4 L409.25 484.7 L410.00 485.0 L410.75 485.2 L411.50 485.5 L412.25 485.9 L413.00 486.2 L413.75 486.6 L414.50 487.0 L415.25 487.5 L416.00 488.0 L416.75 488.4 L417.50 488.9 L418.25 489.3 L419.00 489.7 L419.75 490.0 L420.50 490.3 L421.25 490.6 L422.00 490.9 L422.75 491.1 L423.50 491.3 L424.25 491.6 L425.00 491.8 L425.75 492.1 L426.50 492.3 L427.25 492.6 L428.00 492.9 L428.75 493.3 L429.50 493.7 L430.25 494.1 L431.00 494.5 L431.75 494.9 L432.50 495.3 L433.25 495.7 L434.00 496.1 L434.75 496.4 L435.50 496.7 L436.25 496.9 L437.00 497.1 L437.75 497.4 L438.50 497.6 L439.25 497.8 L440.00 497.9 L440.75 498.1 L441.50 498.2 L442.25 498.4 L443.00 498.5 L443.75 498.6 L444.50 498.7 L445.25 498.8 L446.00 498.9 L446.75 498.9 L447.50 498.9 L448.25 498.9 L449.00 498.9 L449.75 498.9 L450.50 498.9 L451.25 498.8 L452.00 498.8 L452.75 498.7 L453.50 498.7 L454.25 498.6 L455.00 498.5 L455.75 498.4 L456.50 498.3 L457.25 498.2 L458.00 498.1 L458.75 497.9 L459.50 497.7 L460.25 497.4 L461.00 497.1 L461.75 496.8 L462.50 496.5 L463.25 496.1 L464.00 495.7 L464.75 495.2 L465.50 494.6 L466.25 494.0 L467.00 493.2 L467.75 492.5 L468.50 491.8 L469.25 491.1 L470.00 490.4 L470.75 489.8 L471.50 489.1 L472.25 488.4 L473.00 487.7 L473.75 487.1 L474.50 486.5 L475.25 486.0 L476.00 485.5 L476.75 485.2 L477.50 484.9 L478.25 484.6 L479.00 484.3 L479.75 484.1 L480.50 483.9 L481.25 483.7 L482.00 483.6 L482.75 483.7 L483.50 483.9 L484.25 484.1 L485.00 484.3 L485.75 484.6 L486.50 484.8 L487.25 485.1 L488.00 485.4 L488.75 485.7 L489.50 486.1 L490.25 486.4 L491.00 486.9 L491.75 487.3 L492.50 487.8 L493.25 488.2 L494.00 488.7 L494.75 489.1 L495.50 489.5 L496.25 489.9 L497.00 490.2 L497.75 490.5 L498.50 490.8 L499.25 491.0 L500.00 491.2 L500.75 491.5 L501.50 491.7 L502.25 492.0 L503.00 492.2 L503.75 492.5 L504.50 492.8 L505.25 493.1 L506.00 493.5 L506.75 493.9 L507.50 494.3 L508.25 494.8 L509.00 495.2 L509.75 495.6 L510.50 496.0 L511.25 496.3 L512.00 496.6 L512.75 496.8 L513.50 497.0 L514.25 497.3 L515.00 497.5 L515.75 497.7 L516.50 497.9 L517.25 498.0 L518.00 498.2 L518.75 498.3 L519.50 498.4 L520.25 498.5 L521.00 498.6 L521.75 498.7 L522.50 498.8 L523.25 498.9 L524.00 498.9 L524.75 498.9 L525.50 498.9 L526.25 498.9 L527.00 498.9 L527.75 498.9 L528.50 498.8 L529.25 498.7 L530.00 498.7 L530.75 498.6 L531.50 498.5 L532.25 498.4 L533.00 498.4 L533.75 498.3 L534.50 498.2 L535.25 498.0 L536.00 497.8 L536.75 497.6 L537.50 497.3 L538.25 497.0 L539.00 496.6 L539.75 496.2 L540.50 495.9 L541.25 495.4 L542.00 494.9 L542.75 494.2 L543.50 493.5 L544.25 492.8 L545.00 492.1 L545.75 491.3 L546.50 490.7 L547.25 490.0 L548.00 489.4 L548.75 488.7 L549.50 488.0 L550.25 487.3 L551.00 486.7 L551.75 486.2 L552.50 485.7 L553.25 485.3 L554.00 485.0 L554.75 484.7 L555.50 484.4 L556.25 484.2 L557.00 484.0 L557.75 483.8 L558.50 483.7 L559.25 483.6 L560.00 483.8 L560.75 484.0 L561.50 484.2 L562.25 484.5 L563.00 484.7 L563.75 485.0 L564.50 485.3 L565.25 485.6 L566.00 485.9 L566.75 486.3 L567.50 486.7 L568.25 487.1 L569.00 487.6 L569.75 488.1 L570.50 488.5 L571.25 489.0 L572.00 489.4 L572.75 489.8 L573.50 490.1 L574.25 490.4 L575.00 490.7 L575.75 490.9 L576.50 491.1 L577.25 491.4 L578.00 491.6 L578.75 491.9 L579.50 492.1 L580.25 492.4 L581.00 492.7 L581.75 493.0 L582.50 493.3 L583.25 493.7 L584.00 494.2 L584.75 494.6 L585.50 495.0 L586.25 495.4 L587.00 495.8 L587.75 496.2 L588.50 496.5 L589.25 496.7 L590.00 497.0 L590.75 497.2 L591.50 497.4 L592.25 497.6 L593.00 497.8 L593.75 498.0 L594.50 498.1 L595.25 498.3 L596.00 498.4 L596.75 498.5 L597.50 498.6 L598.25 498.7 L599.00 498.8 L599.75 498.9 L600.50 498.9 L601.25 498.9 L602.00 498.9 L602.75 498.9 L603.50 498.9 L604.25 498.9 L605.00 498.8 L605.75 498.8 L606.50 498.7 L607.25 498.6 L608.00 498.6 L608.75 498.5 L609.50 498.4 L610.25 498.3 L611.00 498.2 L611.75 498.1 L612.50 497.9 L613.25 497.7 L614.00 497.4 L614.75 497.1 L615.50 496.7 L616.25 496.4 L617.00 496.0 L617.75 495.6 L618.50 495.1 L619.25 494.5 L620.00 493.8 L620.75 493.1 L621.50 492.4 L622.25 491.6 L623.00 490.9 L623.75 490.3 L624.50 489.6 L625.25 488.9 L626.00 488.3 L626.75 487.6 L627.50 486.9 L628.25 486.4 L629.00 485.9 L629.75 485.5 L630.50 485.1 L631.25 484.8 L632.00 484.5 L632.75 484.3 L633.50 484.0 L634.25 483.9 L635.00 483.7 L635.75 483.6 L636.50 483.7 L637.25 483.9 L638.00 484.1 L638.75 484.4 L639.50 484.6 L640.25 484.9 L641.00 485.2 L641.75 485.5 L642.50 485.8 L643.25 486.1 L644.00 486.5 L644.75 487.0 L645.50 487.4 L646.25 487.9 L647.00 488.3 L647.75 488.8 L648.50 489.2 L649.25 489.6 L650.00 490.0 L650.75 490.3 L651.50 490.5 L652.25 490.8 L653.00 491.1 L653.75 491.3 L654.50 491.5 L655.25 491.8 L656.00 492.0 L656.75 492.3 L657.50 492.5 L658.25 492.8 L659.00 493.2 L659.75 493.6 L660.50 494.0 L661.25 494.4 L662.00 494.8 L662.75 495.3 L663.50 495.7 L664.25 496.0 L665.00 496.3 L665.75 496.6 L666.50 496.9 L667.25 497.1 L668.00 497.3 L668.75 497.5 L669.50 497.7 L670.25 497.9 L671.00 498.1 L671.75 498.2 L672.50 498.4 L673.25 498.5 L674.00 498.6 L674.75 498.7 L675.50 498.8 L676.25 498.8 L677.00 498.9 L677.75 498.9 L678.50 498.9 L679.25 498.9 L680.00 498.9 L680.75 498.9 L681.50 498.8 L682.25 498.8 L683.00 498.7 L683.75 498.7 L684.50 498.6 L685.25 498.5 L686.00 498.4 L686.75 498.3 L687.50 498.2 L688.25 498.1 L689.00 498.0 L689.75 497.8 L690.50 497.5 L691.25 497.2 L692.00 496.9 L692.75 496.5 L693.50 496.2 L694.25 495.8 L695.00 495.3 L695.75 494.7 L696.50 494.1 L697.25 493.4 L698.00 492.7 L698.75 491.9 L699.50 491.2 L700.25 490.5 L701.00 489.9 L701.75 489.2 L702.50 488.5 L703.25 487.8 L704.00 487.2 L704.75 486.6 L705.50 486.1 L706.25 485.6 L707.00 485.3 L707.75 485.0 L708.50 484.7 L709.25 484.4 L710.00 484.1 L710.75 483.9 L711.50 483.8 L712.25 483.6 L713.00 483.6 L713.75 483.8 L714.50 484.1 L715.25 484.3 L716.00 484.5 L716.75 484.8 L717.50 485.1 L718.25 485.4 L719.00 485.7 L719.75 486.0 L720.50 486.4 L721.25 486.8 L722.00 487.2 L722.75 487.7 L723.50 488.1 L724.25 488.6 L725.00 489.0 L725.75 489.5 L726.50 489.8 L727.25 490.1 L728.00 490.4" stroke="#c40000" stroke-width="1.25" fill="none" stroke-linejoin="round" clip-path="url(#wc)"/>
<path d="M50.00 543.8 L50.75 544.1 L51.50 544.4 L52.25 544.6 L53.00 544.8 L53.75 545.1 L54.50 545.3 L55.25 545.5 L56.00 545.6 L56.75 545.8 L57.50 545.9 L58.25 546.1 L59.00 546.2 L59.75 546.3 L60.50 546.4 L61.25 546.5 L62.00 546.6 L62.75 546.6 L63.50 546.6 L64.25 546.6 L65.00 546.6 L65.75 546.6 L66.50 546.6 L67.25 546.5 L68.00 546.5 L68.75 546.4 L69.50 546.4 L70.25 546.3 L71.00 546.2 L71.75 546.1 L72.50 546.0 L73.25 545.9 L74.00 545.8 L74.75 545.6 L75.50 545.4 L76.25 545.1 L77.00 544.8 L77.75 544.5 L78.50 544.2 L79.25 543.8 L80.00 543.4 L80.75 542.9 L81.50 542.3 L82.25 541.7 L83.00 540.9 L83.75 540.2 L84.50 539.5 L85.25 538.8 L86.00 538.1 L86.75 537.5 L87.50 536.8 L88.25 536.1 L89.00 535.4 L89.75 534.8 L90.50 534.2 L91.25 533.7 L92.00 533.2 L92.75 532.9 L93.50 532.6 L94.25 532.3 L95.00 532.0 L95.75 531.8 L96.50 531.6 L97.25 531.4 L98.00 531.3 L98.75 531.4 L99.50 531.6 L100.25 531.8 L101.00 532.0 L101.75 532.3 L102.50 532.5 L103.25 532.8 L104.00 533.1 L104.75 533.4 L105.50 533.8 L106.25 534.1 L107.00 534.6 L107.75 535.0 L108.50 535.5 L109.25 535.9 L110.00 536.4 L110.75 536.8 L111.50 537.2 L112.25 537.6 L113.00 537.9 L113.75 538.2 L114.50 538.5 L115.25 538.7 L116.00 538.9 L116.75 539.2 L117.50 539.4 L118.25 539.7 L119.00 539.9 L119.75 540.2 L120.50 540.5 L121.25 540.8 L122.00 541.2 L122.75 541.6 L123.50 542.0 L124.25 542.5 L125.00 542.9 L125.75 543.3 L126.50 543.7 L127.25 544.0 L128.00 544.3 L128.75 544.5 L129.50 544.7 L130.25 545.0 L131.00 545.2 L131.75 545.4 L132.50 545.6 L133.25 545.7 L134.00 545.9 L134.75 546.0 L135.50 546.1 L136.25 546.2 L137.00 546.3 L137.75 546.4 L138.50 546.5 L139.25 546.6 L140.00 546.6 L140.75 546.6 L141.50 546.6 L142.25 546.6 L143.00 546.6 L143.75 546.6 L144.50 546.5 L145.25 546.4 L146.00 546.4 L146.75 546.3 L147.50 546.2 L148.25 546.1 L149.00 546.1 L149.75 546.0 L150.50 545.9 L151.25 545.7 L152.00 545.5 L152.75 545.3 L153.50 545.0 L154.25 544.7 L155.00 544.3 L155.75 543.9 L156.50 543.6 L157.25 543.1 L158.00 542.6 L158.75 541.9 L159.50 541.2 L160.25 540.5 L161.00 539.8 L161.75 539.0 L162.50 538.4 L163.25 537.7 L164.00 537.1 L164.75 536.4 L165.50 535.7 L166.25 535.0 L167.00 534.4 L167.75 533.9 L168.50 533.4 L169.25 533.0 L170.00 532.7 L170.75 532.4 L171.50 532.1 L172.25 531.9 L173.00 531.7 L173.75 531.5 L174.50 531.4 L175.25 531.3 L176.00 531.5 L176.75 531.7 L177.50 531.9 L178.25 532.2 L179.00 532.4 L179.75 532.7 L180.50 533.0 L181.25 533.3 L182.00 533.6 L182.75 534.0 L183.50 534.4 L184.25 534.8 L185.00 535.3 L185.75 535.8 L186.50 536.2 L187.25 536.7 L188.00 537.1 L188.75 537.5 L189.50 537.8 L190.25 538.1 L191.00 538.4 L191.75 538.6 L192.50 538.8 L193.25 539.1 L194.00 539.3 L194.75 539.6 L195.50 539.8 L196.25 540.1 L197.00 540.4 L197.75 540.7 L198.50 541.0 L199.25 541.4 L200.00 541.9 L200.75 542.3 L201.50 542.7 L202.25 543.1 L203.00 543.5 L203.75 543.9 L204.50 544.2 L205.25 544.4 L206.00 544.7 L206.75 544.9 L207.50 545.1 L208.25 545.3 L209.00 545.5 L209.75 545.7 L210.50 545.8 L211.25 546.0 L212.00 546.1 L212.75 546.2 L213.50 546.3 L214.25 546.4 L215.00 546.5 L215.75 546.6 L216.50 546.6 L217.25 546.6 L218.00 546.6 L218.75 546.6 L219.50 546.6 L220.25 546.6 L221.00 546.5 L221.75 546.5 L222.50 546.4 L223.25 546.3 L224.00 546.3 L224.75 546.2 L225.50 546.1 L226.25 546.0 L227.00 545.9 L227.75 545.8 L228.50 545.6 L229.25 545.4 L230.00 545.1 L230.75 544.8 L231.50 544.4 L232.25 544.1 L233.00 543.7 L233.75 543.3 L234.50 542.8 L235.25 542.2 L236.00 541.5 L236.75 540.8 L237.50 540.1 L238.25 539.3 L239.00 538.6 L239.75 538.0 L240.50 537.3 L241.25 536.6 L242.00 536.0 L242.75 535.3 L243.50 534.6 L244.25 534.1 L245.00 533.6 L245.75 533.2 L246.50 532.8 L247.25 532.5 L248.00 532.2 L248.75 532.0 L249.50 531.7 L250.25 531.6 L251.00 531.4 L251.75 531.3 L252.50 531.4 L253.25 531.6 L254.00 531.8 L254.75 532.1 L255.50 532.3 L256.25 532.6 L257.00 532.9 L257.75 533.2 L258.50 533.5 L259.25 533.8 L260.00 534.2 L260.75 534.7 L261.50 535.1 L262.25 535.6 L263.00 536.0 L263.75 536.5 L264.50 536.9 L265.25 537.3 L266.00 537.7 L266.75 538.0 L267.50 538.2 L268.25 538.5 L269.00 538.8 L269.75 539.0 L270.50 539.2 L271.25 539.5 L272.00 539.7 L272.75 540.0 L273.50 540.2 L274.25 540.5 L275.00 540.9 L275.75 541.3 L276.50 541.7 L277.25 542.1 L278.00 542.5 L278.75 543.0 L279.50 543.4 L280.25 543.7 L281.00 544.0 L281.75 544.3 L282.50 544.6 L283.25 544.8 L284.00 545.0 L284.75 545.2 L285.50 545.4 L286.25 545.6 L287.00 545.8 L287.75 545.9 L288.50 546.1 L289.25 546.2 L290.00 546.3 L290.75 546.4 L291.50 546.5 L292.25 546.5 L293.00 546.6 L293.75 546.6 L294.50 546.6 L295.25 546.6 L296.00 546.6 L296.75 546.6 L297.50 546.5 L298.25 546.5 L299.00 546.4 L299.75 546.4 L300.50 546.3 L301.25 546.2 L302.00 546.1 L302.75 546.0 L303.50 545.9 L304.25 545.8 L305.00 545.7 L305.75 545.5 L306.50 545.2 L307.25 544.9 L308.00 544.6 L308.75 544.2 L309.50 543.9 L310.25 543.5 L311.00 543.0 L311.75 542.4 L312.50 541.8 L313.25 541.1 L314.00 540.4 L314.75 539.6 L315.50 538.9 L316.25 538.2 L317.00 537.6 L317.75 536.9 L318.50 536.2 L319.25 535.5 L320.00 534.9 L320.75 534.3 L321.50 533.8 L322.25 533.3 L323.00 533.0 L323.75 532.7 L324.50 532.4 L325.25 532.1 L326.00 531.8 L326.75 531.6 L327.50 531.5 L328.25 531.3 L329.00 531.3 L329.75 531.5 L330.50 531.8 L331.25 532.0 L332.00 532.2 L332.75 532.5 L333.50 532.8 L334.25 533.1 L335.00 533.4 L335.75 533.7 L336.50 534.1 L337.25 534.5 L338.00 534.9 L338.75 535.4 L339.50 535.8 L340.25 536.3 L341.00 536.7 L341.75 537.2 L342.50 537.5 L343.25 537.8 L344.00 538.1 L344.75 538.4 L345.50 538.7 L346.25 538.9 L347.00 539.1 L347.75 539.4 L348.50 539.6 L349.25 539.9 L350.00 540.1 L350.75 540.4 L351.50 540.8 L352.25 541.1 L353.00 541.5 L353.75 541.9 L354.50 542.4 L355.25 542.8 L356.00 543.2 L356.75 543.6 L357.50 543.9 L358.25 544.2 L359.00 544.5 L359.75 544.7 L360.50 544.9 L361.25 545.1 L362.00 545.3 L362.75 545.5 L363.50 545.7 L364.25 545.9 L365.00 546.0 L365.75 546.1 L366.50 546.2 L367.25 546.3 L368.00 546.4 L368.75 546.5 L369.50 546.6 L370.25 546.6 L371.00 546.6 L371.75 546.6 L372.50 546.6 L373.25 546.6 L374.00 546.6 L374.75 546.5 L375.50 546.5 L376.25 546.4 L377.00 546.3 L377.75 546.2 L378.50 546.2 L379.25 546.1 L380.00 546.0 L380.75 545.9 L381.50 545.7 L382.25 545.5 L383.00 545.3 L383.75 545.0 L384.50 544.7 L385.25 544.4 L386.00 544.0 L386.75 543.6 L387.50 543.2 L388.25 542.7 L389.00 542.1 L389.75 541.4 L390.50 540.6 L391.25 539.9 L392.00 539.2 L392.75 538.5 L393.50 537.8 L394.25 537.2 L395.00 536.5 L395.75 535.8 L396.50 535.2 L397.25 534.5 L398.00 534.0 L398.75 533.5 L399.50 533.1 L400.25 532.8 L401.00 532.5 L401.75 532.2 L402.50 531.9 L403.25 531.7 L404.00 531.5 L404.75 531.4 L405.50 531.3 L406.25 531.5 L407.00 531.7 L407.75 531.9 L408.50 532.1 L409.25 532.4 L410.00 532.7 L410.75 532.9 L411.50 533.2 L412.25 533.6 L413.00 533.9 L413.75 534.3 L414.50 534.7 L415.25 535.2 L416.00 535.7 L416.75 536.1 L417.50 536.6 L418.25 537.0 L419.00 537.4 L419.75 537.7 L420.50 538.0 L421.25 538.3 L422.00 538.6 L422.75 538.8 L423.50 539.0 L424.25 539.3 L425.00 539.5 L425.75 539.8 L426.50 540.0 L427.25 540.3 L428.00 540.6 L428.75 541.0 L429.50 541.4 L430.25 541.8 L431.00 542.2 L431.75 542.6 L432.50 543.0 L433.25 543.4 L434.00 543.8 L434.75 544.1 L435.50 544.4 L436.25 544.6 L437.00 544.8 L437.75 545.1 L438.50 545.3 L439.25 545.5 L440.00 545.6 L440.75 545.8 L441.50 545.9 L442.25 546.1 L443.00 546.2 L443.75 546.3 L444.50 546.4 L445.25 546.5 L446.00 546.6 L446.75 546.6 L447.50 546.6 L448.25 546.6 L449.00 546.6 L449.75 546.6 L450.50 546.6 L451.25 546.5 L452.00 546.5 L452.75 546.4 L453.50 546.4 L454.25 546.3 L455.00 546.2 L455.75 546.1 L456.50 546.0 L457.25 545.9 L458.00 545.8 L458.75 545.6 L459.50 545.4 L460.25 545.1 L461.00 544.8 L461.75 544.5 L462.50 544.2 L463.25 543.8 L464.00 543.4 L464.75 542.9 L465.50 542.3 L466.25 541.7 L467.00 540.9 L467.75 540.2 L468.50 539.5 L469.25 538.8 L470.00 538.1 L470.75 537.5 L471.50 536.8 L472.25 536.1 L473.00 535.4 L473.75 534.8 L474.50 534.2 L475.25 533.7 L476.00 533.2 L476.75 532.9 L477.50 532.6 L478.25 532.3 L479.00 532.0 L479.75 531.8 L480.50 531.6 L481.25 531.4 L482.00 531.3 L482.75 531.4 L483.50 531.6 L484.25 531.8 L485.00 532.0 L485.75 532.3 L486.50 532.5 L487.25 532.8 L488.00 533.1 L488.75 533.4 L489.50 533.8 L490.25 534.1 L491.00 534.6 L491.75 535.0 L492.50 535.5 L493.25 535.9 L494.00 536.4 L494.75 536.8 L495.50 537.2 L496.25 537.6 L497.00 537.9 L497.75 538.2 L498.50 538.5 L499.25 538.7 L500.00 538.9 L500.75 539.2 L501.50 539.4 L502.25 539.7 L503.00 539.9 L503.75 540.2 L504.50 540.5 L505.25 540.8 L506.00 541.2 L506.75 541.6 L507.50 542.0 L508.25 542.5 L509.00 542.9 L509.75 543.3 L510.50 543.7 L511.25 544.0 L512.00 544.3 L512.75 544.5 L513.50 544.7 L514.25 545.0 L515.00 545.2 L515.75 545.4 L516.50 545.6 L517.25 545.7 L518.00 545.9 L518.75 546.0 L519.50 546.1 L520.25 546.2 L521.00 546.3 L521.75 546.4 L522.50 546.5 L523.25 546.6 L524.00 546.6 L524.75 546.6 L525.50 546.6 L526.25 546.6 L527.00 546.6 L527.75 546.6 L528.50 546.5 L529.25 546.4 L530.00 546.4 L530.75 546.3 L531.50 546.2 L532.25 546.1 L533.00 546.1 L533.75 546.0 L534.50 545.9 L535.25 545.7 L536.00 545.5 L536.75 545.3 L537.50 545.0 L538.25 544.7 L539.00 544.3 L539.75 543.9 L540.50 543.6 L541.25 543.1 L542.00 542.6 L542.75 541.9 L543.50 541.2 L544.25 540.5 L545.00 539.8 L545.75 539.0 L546.50 538.4 L547.25 537.7 L548.00 537.1 L548.75 536.4 L549.50 535.7 L550.25 535.0 L551.00 534.4 L551.75 533.9 L552.50 533.4 L553.25 533.0 L554.00 532.7 L554.75 532.4 L555.50 532.1 L556.25 531.9 L557.00 531.7 L557.75 531.5 L558.50 531.4 L559.25 531.3 L560.00 531.5 L560.75 531.7 L561.50 531.9 L562.25 532.2 L563.00 532.4 L563.75 532.7 L564.50 533.0 L565.25 533.3 L566.00 533.6 L566.75 534.0 L567.50 534.4 L568.25 534.8 L569.00 535.3 L569.75 535.8 L570.50 536.2 L571.25 536.7 L572.00 537.1 L572.75 537.5 L573.50 537.8 L574.25 538.1 L575.00 538.4 L575.75 538.6 L576.50 538.8 L577.25 539.1 L578.00 539.3 L578.75 539.6 L579.50 539.8 L580.25 540.1 L581.00 540.4 L581.75 540.7 L582.50 541.0 L583.25 541.4 L584.00 541.9 L584.75 542.3 L585.50 542.7 L586.25 543.1 L587.00 543.5 L587.75 543.9 L588.50 544.2 L589.25 544.4 L590.00 544.7 L590.75 544.9 L591.50 545.1 L592.25 545.3 L593.00 545.5 L593.75 545.7 L594.50 545.8 L595.25 546.0 L596.00 546.1 L596.75 546.2 L597.50 546.3 L598.25 546.4 L599.00 546.5 L599.75 546.6 L600.50 546.6 L601.25 546.6 L602.00 546.6 L602.75 546.6 L603.50 546.6 L604.25 546.6 L605.00 546.5 L605.75 546.5 L606.50 546.4 L607.25 546.3 L608.00 546.3 L608.75 546.2 L609.50 546.1 L610.25 546.0 L611.00 545.9 L611.75 545.8 L612.50 545.6 L613.25 545.4 L614.00 545.1 L614.75 544.8 L615.50 544.4 L616.25 544.1 L617.00 543.7 L617.75 543.3 L618.50 542.8 L619.25 542.2 L620.00 541.5 L620.75 540.8 L621.50 540.1 L622.25 539.3 L623.00 538.6 L623.75 538.0 L624.50 537.3 L625.25 536.6 L626.00 536.0 L626.75 535.3 L627.50 534.6 L628.25 534.1 L629.00 533.6 L629.75 533.2 L630.50 532.8 L631.25 532.5 L632.00 532.2 L632.75 532.0 L633.50 531.7 L634.25 531.6 L635.00 531.4 L635.75 531.3 L636.50 531.4 L637.25 531.6 L638.00 531.8 L638.75 532.1 L639.50 532.3 L640.25 532.6 L641.00 532.9 L641.75 533.2 L642.50 533.5 L643.25 533.8 L644.00 534.2 L644.75 534.7 L645.50 535.1 L646.25 535.6 L647.00 536.0 L647.75 536.5 L648.50 536.9 L649.25 537.3 L650.00 537.7 L650.75 538.0 L651.50 538.2 L652.25 538.5 L653.00 538.8 L653.75 539.0 L654.50 539.2 L655.25 539.5 L656.00 539.7 L656.75 540.0 L657.50 540.2 L658.25 540.5 L659.00 540.9 L659.75 541.3 L660.50 541.7 L661.25 542.1 L662.00 542.5 L662.75 543.0 L663.50 543.4 L664.25 543.7 L665.00 544.0 L665.75 544.3 L666.50 544.6 L667.25 544.8 L668.00 545.0 L668.75 545.2 L669.50 545.4 L670.25 545.6 L671.00 545.8 L671.75 545.9 L672.50 546.1 L673.25 546.2 L674.00 546.3 L674.75 546.4 L675.50 546.5 L676.25 546.5 L677.00 546.6 L677.75 546.6 L678.50 546.6 L679.25 546.6 L680.00 546.6 L680.75 546.6 L681.50 546.5 L682.25 546.5 L683.00 546.4 L683.75 546.4 L684.50 546.3 L685.25 546.2 L686.00 546.1 L686.75 546.0 L687.50 545.9 L688.25 545.8 L689.00 545.7 L689.75 545.5 L690.50 545.2 L691.25 544.9 L692.00 544.6 L692.75 544.2 L693.50 543.9 L694.25 543.5 L695.00 543.0 L695.75 542.4 L696.50 541.8 L697.25 541.1 L698.00 540.4 L698.75 539.6 L699.50 538.9 L700.25 538.2 L701.00 537.6 L701.75 536.9 L702.50 536.2 L703.25 535.5 L704.00 534.9 L704.75 534.3 L705.50 533.8 L706.25 533.3 L707.00 533.0 L707.75 532.7 L708.50 532.4 L709.25 532.1 L710.00 531.8 L710.75 531.6 L711.50 531.5 L712.25 531.3 L713.00 531.3 L713.75 531.5 L714.50 531.8 L715.25 532.0 L716.00 532.2 L716.75 532.5 L717.50 532.8 L718.25 533.1 L719.00 533.4 L719.75 533.7 L720.50 534.1 L721.25 534.5 L722.00 534.9 L722.75 535.4 L723.50 535.8 L724.25 536.3 L725.00 536.7 L725.75 537.2 L726.50 537.5 L727.25 537.8 L728.00 538.1" stroke="#c4007a" stroke-width="1.25" fill="none" stroke-linejoin="round" clip-path="url(#wc)"/>
<path transform="translate(764.9 67.6) scale(0.683 0.683)" d="M12 21.6 C11 20.6 0 12.6 0 6.2 C0 2.6 2.8 0 6.2 0 C8.6 0 10.9 1.3 12 3.3 C13.1 1.3 15.4 0 17.8 0 C21.2 0 24 2.6 24 6.2 C24 12.6 13 20.6 12 21.6Z" fill="#0bf90b"/>
<g fill="#f4f4f4"><path d="M665.7 64.6c1.1 0 1.9 .8 1.9 1.9v.9c4.4 .9 7 4.600 7 9.200c0 4.400 .9 7.300 3.500 9.000c.5 .35 .6 .9 .4 1.400c-.2 .5 -.6 .8 -1.200 .8h-23.200c-.6 0 -1 -.3 -1.200 -.8c-.2 -.5 -.1 -1.050 .4 -1.400c2.600 -1.700 3.500 -4.600 3.500 -9.000c0 -4.600 2.600 -8.300 7 -9.200v-.9c0 -1.100 .8 -1.900 1.900 -1.900z"/><path d="M661.9 89.3h7.600c0 2.100 -1.700 3.700 -3.800 3.700s-3.800 -1.600 -3.800 -3.700z"/></g>
<g><rect x="687.2" y="64.6" width="27.6" height="28.1" rx="3.8" fill="#000" stroke="#f0f0f0" stroke-width="1.4"/><circle cx="695.9" cy="74.7" r="2.45" fill="#f4f4f4"/><path d="M703.7 69.3L699.3 80.6" stroke="#f4f4f4" stroke-width="2.0" stroke-linecap="butt"/><circle cx="706.9" cy="75.4" r="1.85" fill="none" stroke="#f4f4f4" stroke-width="1.6"/><path d="M689.8 80.2L696.4 85.0V88.0L689.8 84.9Z" fill="#f2f2f2"/><path d="M697.0 85.0L709.0 80.5L710.4 78.4L712.3 79.0L712.1 81.9L710.8 83.7L699.7 88.7L697.0 89.0Z" fill="#f2f2f2"/><path d="M699.6 86.9L708.9 82.9" stroke="#000" stroke-width="1.0"/></g>
<g><path d="M964.4 296.8c-2.300 0 -4.200 -1.800 -4.200 -4.000c0 -1.900 1.300 -3.500 3.100 -3.900c.3 -2.400 2.400 -4.200 4.900 -4.200c1.900 0 3.600 1.050 4.400 2.600c.35 -.08 .7 -.12 1.050 -.12c2.100 0 3.750 1.600 3.750 3.600c0 .3 0 .5 -.1 .8c.4 .6 .6 1.200 .6 1.900c0 1.850 -1.550 3.320 -3.500 3.320z" fill="#f4f4f4"/><path d="M968.8 295.3V290.6M966.4 292.6L968.8 290.2L971.2 292.6" stroke="#111" stroke-width="1.3" fill="none"/></g>
<path d="M965.71 331.20L968.89 331.20L968.80 332.95L970.41 333.87L971.87 332.92L973.46 335.68L971.91 336.47L971.91 338.33L973.46 339.12L971.87 341.88L970.41 340.93L968.80 341.85L968.89 343.60L965.71 343.60L965.80 341.85L964.19 340.93L962.73 341.88L961.14 339.12L962.69 338.33L962.69 336.47L961.14 335.68L962.73 332.92L964.19 333.87L965.80 332.95ZM969.40 337.40A2.1 2.1 0 1 0 965.20 337.40A2.1 2.1 0 1 0 969.40 337.40Z" fill="#f4f4f4" fill-rule="evenodd" stroke="#f4f4f4" stroke-width="0.6" stroke-linejoin="round"/>
<g transform="translate(937.4 403.0)" fill="none" stroke="#8c8c8c" stroke-width="1.05" stroke-linejoin="round"><path d="M7.3 0.9c-.5 0 -.9 .4 -.9 .9c-2 .5 -3.200 2.200 -3.200 4.400c0 2.600 -.5 4.000 -1.700 5.100h11.600c-1.200 -1.100 -1.700 -2.500 -1.700 -5.100c0 -2.200 -1.200 -3.900 -3.200 -4.400c0 -.5 -.4 -.9 -.9 -.9z"/><path d="M5.700 11.700c0 1 .7 1.700 1.600 1.700s1.600 -.7 1.600 -1.700"/><path d="M14.200 0.700L0.400 13.300" stroke-width="1.15"/></g>
<g transform="translate(937.4 437.4)" fill="none" stroke="#8c8c8c" stroke-width="1.05" stroke-linejoin="round"><path d="M7.3 0.9c-.5 0 -.9 .4 -.9 .9c-2 .5 -3.200 2.200 -3.200 4.400c0 2.600 -.5 4.000 -1.700 5.100h11.600c-1.200 -1.100 -1.700 -2.500 -1.700 -5.100c0 -2.200 -1.200 -3.900 -3.200 -4.400c0 -.5 -.4 -.9 -.9 -.9z"/><path d="M5.700 11.700c0 1 .7 1.700 1.600 1.700s1.600 -.7 1.600 -1.700"/><path d="M14.200 0.700L0.400 13.300" stroke-width="1.15"/></g>
<defs>
<radialGradient id="clg" cx="0.5" cy="0.45" r="0.65">
<stop offset="0" stop-color="#4f97e2"/><stop offset="0.6" stop-color="#3b82d6"/><stop offset="1" stop-color="#2a66bf"/>
</radialGradient>
<linearGradient id="rim" x1="0" x2="1" y1="0" y2="0">
<stop offset="0" stop-color="#2c3031"/><stop offset="0.035" stop-color="#9aa2a1"/><stop offset="0.09" stop-color="#4c5453"/>
<stop offset="0.5" stop-color="#586260"/><stop offset="0.92" stop-color="#495150"/><stop offset="0.97" stop-color="#b4bbba"/><stop offset="1" stop-color="#2c3031"/>
</linearGradient>
</defs>
<g transform="rotate(1.5 100.5 600.5)"><ellipse cx="100.5" cy="600.5" rx="30.8" ry="11.8" fill="url(#clg)"/><path d="M73 596.5C82 589.2 114 587.6 127.5 596.2C113 590.6 86 591.2 73 596.5Z" fill="#e8f2fc" fill-opacity="0.9"/><path d="M99 594.2C105 593.6 111 594.2 114 595.4" stroke="#dbe9f8" stroke-opacity="0.8" stroke-width="0.7" fill="none"/></g>
<g><path d="M396.8 599Q396.8 588.2 407.5 588.2H606.5Q617.4 588.2 617.4 599V619Q617.4 632 604.5 632H603.6L600.2 645H597V632H418V645H415.2L413.2 632H409.5Q396.8 632 396.8 619Z" fill="#121316"/><path d="M397.6 599Q397.6 588.8 407.5 588.8H606.5Q616.6 588.8 616.6 599V604H397.6Z" fill="url(#rim)"/><path d="M398.9 603.5Q398.9 593.6 408.8 593.6H605.9Q615.8 593.6 615.8 603.5V618Q615.8 630.4 603.4 630.4H597.7V643.4Q597.7 646.4 594.7 646.4H420.3Q417.3 646.4 417.3 643.4V630.4H411.3Q398.9 630.4 398.9 618Z" fill="#ececec"/></g>
<rect x="422.2" y="601.3" width="34.6" height="19" rx="2" fill="#ababab" stroke="#8b8b8b" stroke-width="1"/>
<circle cx="426.9" cy="610.8" r="2.7" fill="#f6f6f6" stroke="#2b2b2b" stroke-width="1"/>
<rect x="435.6" y="604.5" width="14.2" height="6.4" fill="#f6f6f6" stroke="#1e1e1e" stroke-width="1.2"/><path d="M446.4 604.5H449.8V610.900H444.6Z" fill="#1e1e1e"/><rect x="433.9" y="606.3" width="1.4" height="2.8" fill="#1e1e1e"/>
<rect x="467.6" y="601.0" width="34.6" height="19" rx="2" fill="#ababab" stroke="#8b8b8b" stroke-width="1"/>
<circle cx="472.4" cy="610.6" r="2.7" fill="#f6f6f6" stroke="#2b2b2b" stroke-width="1"/>
<path d="M483.500 603.900H487.200Q490.600 603.900 490.600 607.100Q490.600 610.300 487.200 610.300H483.500Z" fill="#f6f6f6" stroke="#1e1e1e" stroke-width="1.1"/><path d="M479.900 605.500H483.500M479.900 608.700H483.500" stroke="#1e1e1e" stroke-width="1"/><path d="M490.600 607.100Q493 607.600 495.600 605.200" stroke="#1e1e1e" stroke-width="0.9" fill="none"/>
<rect x="512.9" y="600.6" width="34.6" height="19" rx="2" fill="#ababab" stroke="#8b8b8b" stroke-width="1"/>
<circle cx="517.6" cy="610.5" r="2.7" fill="#f6f6f6" stroke="#2b2b2b" stroke-width="1"/>
<rect x="526.700" y="603.400" width="14.200" height="6.600" fill="#f6f6f6" stroke="#1e1e1e" stroke-width="1.2"/><rect x="525.100" y="605.300" width="1.400" height="2.800" fill="#1e1e1e"/><path d="M530.500 605.600H535.300M535.300 605.600L537.200 607.800M531.500 607.000L536.500 607.400" stroke="#1e1e1e" stroke-width="0.8" fill="none"/>
<circle cx="578.3" cy="609.6" r="14.3" fill="#0c8546"/><path d="M574.1 605.0A6.2 6.2 0 1 0 582.5 605.0" fill="none" stroke="#f4f4f4" stroke-width="2.0" stroke-linecap="round"/><path d="M578.3 602.2V608.3" stroke="#f4f4f4" stroke-width="2.0" stroke-linecap="round"/>
<rect x="851.2" y="586.6" width="111" height="28.8" rx="3" fill="#e3e3e3"/><rect x="855.3" y="613.1" width="12.6" height="0.9" fill="#5a5a5a" fill-opacity="0.8"/>
</svg>
<div class="lay">
<div class="t" style="left:53.86px;top:56px;font-size:16.49px;line-height:18px;color:#f4f412;transform:scaleX(0.9606);transform-origin:0 50%;-webkit-text-stroke:0.3px #f4f412;">Clarity Pt Id: P-880</div>
<div class="t" style="left:193.84px;top:56px;font-size:16.54px;line-height:19px;color:#f4f412;transform:scaleX(0.9606);transform-origin:0 50%;-webkit-text-stroke:0.3px #f4f412;">Bed: 67895</div>
<div class="t" style="left:54.52px;top:80px;font-size:16.15px;line-height:18px;color:#f3a94a;transform:scaleX(0.9606);transform-origin:0 50%;-webkit-text-stroke:0.2px #f3a94a;">Vishavjeet</div>
<div class="t" style="left:139.99px;top:80px;font-size:16.84px;line-height:19px;color:#f3a94a;transform:scaleX(0.9606);transform-origin:0 50%;-webkit-text-stroke:0.2px #f3a94a;">31Y/M</div>
<div class="t" style="left:196.55px;top:80px;font-size:16.34px;line-height:18px;color:#f3a94a;transform:scaleX(0.9606);transform-origin:0 50%;-webkit-text-stroke:0.2px #f3a94a;">ICU 99</div>
<div class="t" style="left:252.50px;top:80px;font-size:16.36px;line-height:18px;color:#f3a94a;transform:scaleX(0.9606);transform-origin:0 50%;-webkit-text-stroke:0.2px #f3a94a;">Device: Recobro 1185</div>
<div class="t" style="left:349.93px;top:105px;font-size:29.26px;line-height:32px;color:#f2f20c;transform:scaleX(0.9801);transform-origin:0 50%;-webkit-text-stroke:0.4px #f2f20c;">DEMO</div>
<div class="t" style="left:640.41px;top:107px;font-size:15.46px;line-height:17px;color:#9a9a9a;transform:scaleX(0.9606);transform-origin:0 50%;">5 LEAD</div>
<div class="t" style="left:640.26px;top:127px;font-size:15.49px;line-height:17px;color:#9a9a9a;transform:scaleX(0.9606);transform-origin:0 50%;">25.0 mm/s</div>
<div class="t" style="left:732.41px;top:54px;font-size:20.11px;line-height:22px;color:#0bf90b;transform:scaleX(0.9606);transform-origin:0 50%;">HR</div>
<div class="t" style="left:733.57px;top:75px;font-size:13.51px;line-height:15px;color:#0bf90b;transform:scaleX(0.9606);transform-origin:0 50%;-webkit-text-stroke:0.3px #0bf90b;">ST</div>
<div class="t" style="left:733.60px;top:88px;font-size:13px;line-height:15px;color:#a6a6a6;">I</div>
<div class="t" style="left:733.60px;top:105px;font-size:13px;line-height:15px;color:#a6a6a6;letter-spacing:-0.1px;">II</div>
<div class="t" style="left:733.60px;top:120px;font-size:13px;line-height:15px;color:#a6a6a6;letter-spacing:-0.35px;">III</div>
<div class="t" style="left:745.13px;top:88px;font-size:12.83px;line-height:15px;color:#0bf90b;transform:scaleX(0.9606);transform-origin:0 50%;-webkit-text-stroke:0.25px #0bf90b;">0.1</div>
<div class="t" style="left:745.13px;top:105px;font-size:12.83px;line-height:15px;color:#0bf90b;transform:scaleX(0.9606);transform-origin:0 50%;-webkit-text-stroke:0.25px #0bf90b;">0.1</div>
<div class="t" style="left:745.13px;top:121px;font-size:12.83px;line-height:15px;color:#0bf90b;transform:scaleX(0.9606);transform-origin:0 50%;-webkit-text-stroke:0.25px #0bf90b;">0.1</div>
<div class="t" style="left:835.15px;top:44px;font-size:77.81px;line-height:86px;color:#0bf90b;transform:scaleX(0.9515);transform-origin:0 50%;-webkit-text-stroke:0.5px #0bf90b;">60</div>
<div class="t" style="left:928.86px;top:55px;font-size:19.37px;line-height:22px;color:#0bf90b;transform:scaleX(0.9606);transform-origin:0 50%;">5L</div>
<div class="t" style="left:936.31px;top:95px;font-size:10.9px;line-height:12px;color:#a6a6a6;transform:scaleX(0.9606);transform-origin:0 50%;">160</div>
<div class="t" style="left:936.36px;top:106px;font-size:10.9px;line-height:12px;color:#a6a6a6;transform:scaleX(0.9606);transform-origin:0 50%;">40</div>
<div class="t" style="left:732.79px;top:141px;font-size:16.51px;line-height:18px;color:#f6f61e;transform:scaleX(0.9606);transform-origin:0 50%;">SPO2</div>
<div class="t" style="left:733.47px;top:158px;font-size:10.64px;line-height:12px;color:#9a9a9a;transform:scaleX(0.9606);transform-origin:0 50%;">Adult</div>
<div class="t" style="left:732.77px;top:188px;font-size:14.29px;line-height:16px;color:#9a9a9a;transform:scaleX(0.9606);transform-origin:0 50%;">PERF</div>
<div class="t" style="left:746.70px;top:206px;font-size:14.19px;line-height:16px;color:#f6f61e;transform:scaleX(0.9606);transform-origin:0 50%;-webkit-text-stroke:0.3px #f6f61e;">5.31 %</div>
<div class="t" style="left:835.30px;top:131px;font-size:77.81px;line-height:86px;color:#f6f61e;transform:scaleX(0.9601);transform-origin:0 50%;-webkit-text-stroke:0.5px #f6f61e;">98</div>
<div class="t" style="left:931.61px;top:151px;font-size:16.16px;line-height:18px;color:#f6f61e;font-weight:bold;transform:scaleX(0.9606);transform-origin:0 50%;">%</div>
<div class="t" style="left:937.21px;top:174px;font-size:10.9px;line-height:12px;color:#a6a6a6;transform:scaleX(0.9606);transform-origin:0 50%;">100</div>
<div class="t" style="left:937.55px;top:183px;font-size:10.9px;line-height:12px;color:#a6a6a6;transform:scaleX(0.9606);transform-origin:0 50%;">85</div>
<div class="t" style="left:732.66px;top:228px;font-size:15.63px;line-height:17px;color:#ff0606;transform:scaleX(0.9606);transform-origin:0 50%;">IBP1</div>
<div class="t" style="left:739.86px;top:245px;font-size:17.31px;line-height:20px;color:#ff0606;transform:scaleX(0.9606);transform-origin:0 50%;">ART</div>
<div class="t" style="left:731.41px;top:266px;font-size:10.9px;line-height:12px;color:#a6a6a6;transform:scaleX(0.9606);transform-origin:0 50%;">140</div>
<div class="t" style="left:731.78px;top:276px;font-size:10.9px;line-height:12px;color:#a6a6a6;transform:scaleX(0.9606);transform-origin:0 50%;">55</div>
<div class="t" style="left:879.48px;top:230px;font-size:31.31px;line-height:35px;color:#ff0606;transform:scaleX(1.0406);transform-origin:0 50%;-webkit-text-stroke:0.25px #ff0606;">99</div>
<div class="t" style="left:768.01px;top:261px;font-size:51.2px;line-height:57px;color:#ff0606;transform:scaleX(0.9617);transform-origin:0 50%;-webkit-text-stroke:0.4px #ff0606;">123/82</div>
<div class="t" style="left:936.81px;top:227px;font-size:10.9px;line-height:12px;color:#a6a6a6;transform:scaleX(0.9606);transform-origin:0 50%;">104</div>
<div class="t" style="left:937.18px;top:236px;font-size:10.9px;line-height:12px;color:#a6a6a6;transform:scaleX(0.9606);transform-origin:0 50%;">50</div>
<div class="t" style="left:937.10px;top:266px;font-size:10.9px;line-height:12px;color:#a6a6a6;transform:scaleX(0.9606);transform-origin:0 50%;">95</div>
<div class="t" style="left:937.06px;top:276px;font-size:10.9px;line-height:12px;color:#a6a6a6;transform:scaleX(0.9606);transform-origin:0 50%;">45</div>
<div class="t" style="left:732.59px;top:313px;font-size:16.42px;line-height:18px;color:#ff1493;transform:scaleX(0.9606);transform-origin:0 50%;">IBP2</div>
<div class="t" style="left:739.18px;top:331px;font-size:17.9px;line-height:20px;color:#ff1493;transform:scaleX(0.9606);transform-origin:0 50%;">PA</div>
<div class="t" style="left:731.41px;top:353px;font-size:10.9px;line-height:12px;color:#a6a6a6;transform:scaleX(0.9606);transform-origin:0 50%;">140</div>
<div class="t" style="left:731.78px;top:362px;font-size:10.9px;line-height:12px;color:#a6a6a6;transform:scaleX(0.9606);transform-origin:0 50%;">55</div>
<div class="t" style="left:879.47px;top:315px;font-size:31.73px;line-height:36px;color:#ff1493;transform:scaleX(1.0318);transform-origin:0 50%;-webkit-text-stroke:0.25px #ff1493;">97</div>
<div class="t" style="left:768.02px;top:347px;font-size:51.2px;line-height:57px;color:#ff1493;transform:scaleX(0.9577);transform-origin:0 50%;-webkit-text-stroke:0.4px #ff1493;">122/80</div>
<div class="t" style="left:936.81px;top:313px;font-size:10.9px;line-height:12px;color:#a6a6a6;transform:scaleX(0.9606);transform-origin:0 50%;">104</div>
<div class="t" style="left:937.18px;top:323px;font-size:10.9px;line-height:12px;color:#a6a6a6;transform:scaleX(0.9606);transform-origin:0 50%;">50</div>
<div class="t" style="left:937.10px;top:353px;font-size:10.9px;line-height:12px;color:#a6a6a6;transform:scaleX(0.9606);transform-origin:0 50%;">95</div>
<div class="t" style="left:937.06px;top:362px;font-size:10.9px;line-height:12px;color:#a6a6a6;transform:scaleX(0.9606);transform-origin:0 50%;">45</div>
<div class="t" style="left:732.70px;top:399px;font-size:16.56px;line-height:19px;color:#84f2e8;transform:scaleX(0.9606);transform-origin:0 50%;">CO2</div>
<div class="t" style="left:733.30px;top:415px;font-size:11.74px;line-height:13px;color:#84f2e8;transform:scaleX(0.9606);transform-origin:0 50%;-webkit-text-stroke:0.2px #84f2e8;">(mmHg)</div>
<div class="t" style="left:756.71px;top:438px;font-size:10.9px;line-height:12px;color:#9a9a9a;transform:scaleX(0.9606);transform-origin:0 50%;">40</div>
<div class="t" style="left:756.68px;top:449px;font-size:10.9px;line-height:12px;color:#9a9a9a;transform:scaleX(0.9606);transform-origin:0 50%;">6</div>
<div class="t" style="left:732.57px;top:462px;font-size:16.79px;line-height:19px;color:#84f2e8;transform:scaleX(0.9606);transform-origin:0 50%;">RRc</div>
<div class="t" style="left:841.37px;top:410px;font-size:16.8px;line-height:19px;color:#84f2e8;transform:scaleX(0.9606);transform-origin:0 50%;">Et</div>
<div class="t" style="left:872.97px;top:395px;font-size:46.36px;line-height:52px;color:#84f2e8;transform:scaleX(0.9662);transform-origin:0 50%;-webkit-text-stroke:0.3px #84f2e8;">32</div>
<div class="t" style="left:784.05px;top:436px;font-size:46.57px;line-height:52px;color:#84f2e8;transform:scaleX(0.9649);transform-origin:0 50%;-webkit-text-stroke:0.3px #84f2e8;">20</div>
<div class="t" style="left:852.91px;top:463px;font-size:14.62px;line-height:16px;color:#84f2e8;">i</div>
<div class="t" style="left:886.10px;top:436px;font-size:46.57px;line-height:52px;color:#84f2e8;transform:scaleX(0.9398);transform-origin:0 50%;-webkit-text-stroke:0.3px #84f2e8;">0</div>
<div class="t" style="left:733.38px;top:486px;font-size:19.25px;line-height:21px;color:#ececec;transform:scaleX(0.9606);transform-origin:0 50%;">T1&deg;C</div>
<div class="t" style="left:737.94px;top:515px;font-size:13.64px;line-height:15px;color:#ececec;transform:scaleX(0.9606);transform-origin:0 50%;">dT =  0.2</div>
<div class="t" style="left:733.38px;top:539px;font-size:19.25px;line-height:21px;color:#ececec;transform:scaleX(0.9606);transform-origin:0 50%;">T2&deg;C</div>
<div class="t" style="left:818.85px;top:485px;font-size:37.95px;line-height:42px;color:#ececec;transform:scaleX(0.9678);transform-origin:0 50%;-webkit-text-stroke:0.25px #ececec;">36.4</div>
<div class="t" style="left:818.84px;top:529px;font-size:37.88px;line-height:42px;color:#ececec;transform:scaleX(0.9774);transform-origin:0 50%;-webkit-text-stroke:0.25px #ececec;">36.6</div>
<div class="t" style="left:932.11px;top:489px;font-size:10.9px;line-height:12px;color:#9a9a9a;transform:scaleX(0.9606);transform-origin:0 50%;">38.0</div>
<div class="t" style="left:932.11px;top:502px;font-size:10.9px;line-height:12px;color:#9a9a9a;transform:scaleX(0.9606);transform-origin:0 50%;">36.0</div>
<div class="t" style="left:932.11px;top:534px;font-size:10.9px;line-height:12px;color:#9a9a9a;transform:scaleX(0.9606);transform-origin:0 50%;">38.0</div>
<div class="t" style="left:932.11px;top:547px;font-size:10.9px;line-height:12px;color:#9a9a9a;transform:scaleX(0.9606);transform-origin:0 50%;">36.0</div>
<div class="t" style="left:82.20px;top:595px;font-size:11.8px;line-height:14px;color:#ffffff;font-weight:bold;">Clarity</div>
<div class="t" style="left:430.20px;top:612px;font-size:6.3px;line-height:7px;color:#1e1e1e;font-weight:bold;">Low Bat</div>
<div class="t" style="left:480.20px;top:611px;font-size:6.3px;line-height:7px;color:#1e1e1e;font-weight:bold;">Mains</div>
<div class="t" style="left:523.30px;top:612px;font-size:6.3px;line-height:7px;color:#1e1e1e;font-weight:bold;">Charg.</div>
<div class="t" style="left:854.40px;top:589px;font-size:14px;line-height:16px;color:#5a5a5a;font-weight:bold;letter-spacing:-0.5px;-webkit-text-stroke:0.45px #5a5a5a;">Recobro</div>
<div class="t" style="left:914.50px;top:588px;font-size:15px;line-height:17px;color:#5a5a5a;font-weight:bold;font-style:italic;letter-spacing:0.3px;">View</div>
<div class="t" style="left:951.00px;top:591px;font-size:8.5px;line-height:10px;color:#5a5a5a;font-weight:bold;">&reg;</div>
<div class="t" style="left:907.00px;top:604px;font-size:6.9px;line-height:7px;color:#5a5a5a;font-weight:bold;font-style:italic;">Patient Monitor</div>
</div>
</body>
</html>
